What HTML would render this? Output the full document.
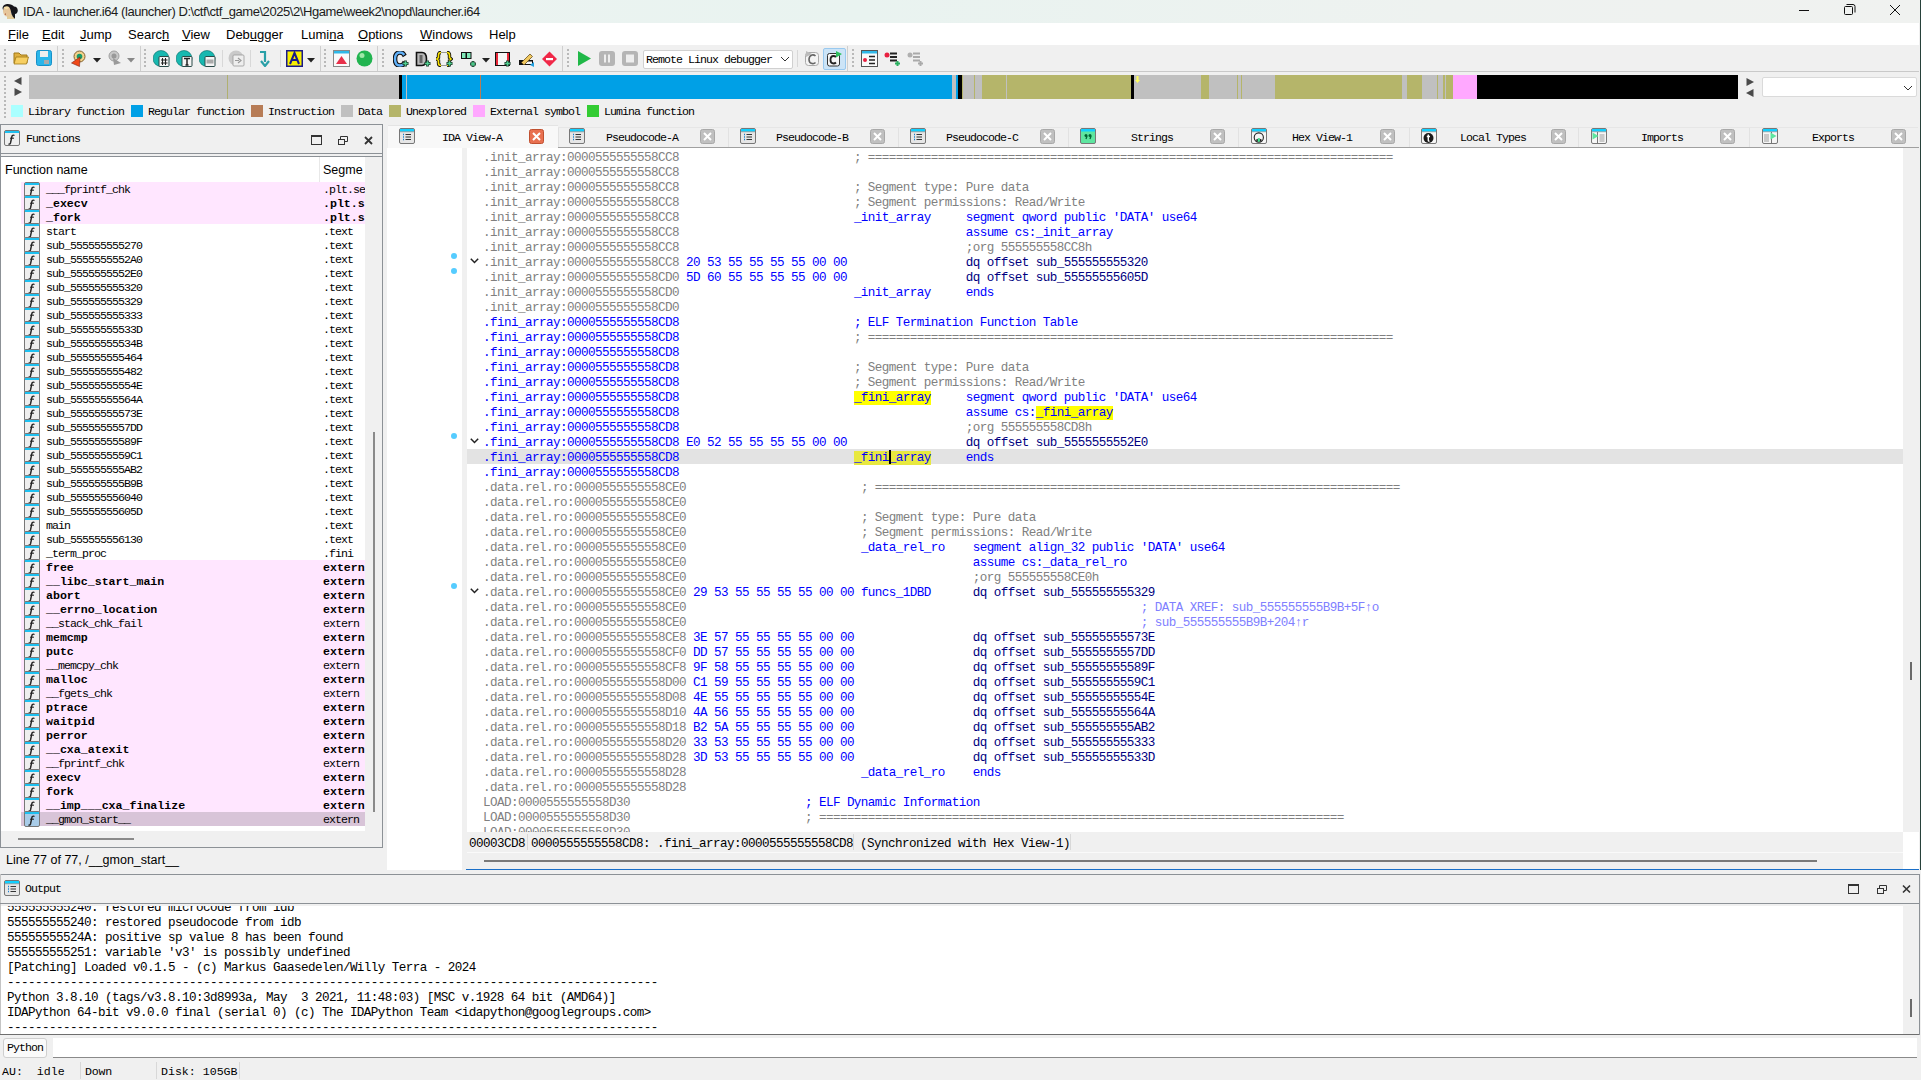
<!DOCTYPE html><html><head><meta charset="utf-8"><style>
html,body{margin:0;padding:0;}
body{width:1921px;height:1080px;position:relative;overflow:hidden;background:#f0f0f0;}
.ss{font-family:"Liberation Mono",monospace;font-size:11.6px;letter-spacing:-0.96px;line-height:14px;color:#000;}
.dm{font-family:"Liberation Mono",monospace;font-size:12.6px;letter-spacing:-0.56px;line-height:15px;}
.ui{font-family:"Liberation Sans",sans-serif;}
</style></head><body>
<div style="position:absolute;left:0px;top:0px;width:1921px;height:23px;background:linear-gradient(90deg,#edf3f1 0%,#e9f3f0 45%,#eef2f0 75%,#f0f2f0 100%)"></div><svg style="position:absolute;left:0px;top:0px" width="24" height="23" viewBox="0 0 24 23"><path d="M7 14 L14 14 L15 19 L7 19 Z" fill="#e3cc98"/><ellipse cx="7.2" cy="11" rx="4.2" ry="5.5" fill="#e6c69a"/><ellipse cx="6.5" cy="7.5" rx="2.2" ry="1.8" fill="#f6e2a8"/><path d="M5.5 13.5 Q5 14 5.5 15" stroke="#b86848" stroke-width="1"/><path d="M2.5 8 Q3 4.5 7 4 Q12 3.8 14 6.5 Q17.5 6.5 17.8 10.5 Q17.5 13.8 15 14 L15 18.8 Q12.5 17 11.5 14 Q11 10 9.5 7.5 Q7.5 5.5 4 7 Q3 9 3.2 10.5 Z" fill="#15161a"/></svg><div class="title" style="position:absolute;left:23px;top:3px;white-space:pre;font-family:'Liberation Sans', sans-serif;font-size:13px;line-height:17px;color:#1b1b1b;letter-spacing:-0.43px">IDA - launcher.i64 (launcher) D:\ctf\ctf_game\2025\2\Hgame\week2\nopd\launcher.i64</div><svg style="position:absolute;left:1795px;top:0px" width="120" height="23" viewBox="0 0 120 23"><line x1="4" y1="10.5" x2="14" y2="10.5" stroke="#111" stroke-width="1"/><rect x="49.5" y="6.5" width="8" height="8" rx="1" fill="none" stroke="#111"/><path d="M51.5 4.5 H58 Q60 4.5 60 6.5 V12.5" fill="none" stroke="#111"/><path d="M95 5 L105 15 M105 5 L95 15" stroke="#111" stroke-width="1"/></svg><div style="position:absolute;left:0px;top:23px;width:1919px;height:22px;background:#ffffff"></div><div class="menu" style="position:absolute;left:8px;top:26px;white-space:pre;font-family:'Liberation Sans', sans-serif;font-size:13px;line-height:17px;color:#000"><u>F</u>ile</div><div class="menu" style="position:absolute;left:42px;top:26px;white-space:pre;font-family:'Liberation Sans', sans-serif;font-size:13px;line-height:17px;color:#000"><u>E</u>dit</div><div class="menu" style="position:absolute;left:80px;top:26px;white-space:pre;font-family:'Liberation Sans', sans-serif;font-size:13px;line-height:17px;color:#000"><u>J</u>ump</div><div class="menu" style="position:absolute;left:128px;top:26px;white-space:pre;font-family:'Liberation Sans', sans-serif;font-size:13px;line-height:17px;color:#000">Searc<u>h</u></div><div class="menu" style="position:absolute;left:182px;top:26px;white-space:pre;font-family:'Liberation Sans', sans-serif;font-size:13px;line-height:17px;color:#000"><u>V</u>iew</div><div class="menu" style="position:absolute;left:226px;top:26px;white-space:pre;font-family:'Liberation Sans', sans-serif;font-size:13px;line-height:17px;color:#000">Deb<u>u</u>gger</div><div class="menu" style="position:absolute;left:301px;top:26px;white-space:pre;font-family:'Liberation Sans', sans-serif;font-size:13px;line-height:17px;color:#000">Lumi<u>n</u>a</div><div class="menu" style="position:absolute;left:358px;top:26px;white-space:pre;font-family:'Liberation Sans', sans-serif;font-size:13px;line-height:17px;color:#000"><u>O</u>ptions</div><div class="menu" style="position:absolute;left:420px;top:26px;white-space:pre;font-family:'Liberation Sans', sans-serif;font-size:13px;line-height:17px;color:#000"><u>W</u>indows</div><div class="menu" style="position:absolute;left:489px;top:26px;white-space:pre;font-family:'Liberation Sans', sans-serif;font-size:13px;line-height:17px;color:#000">Help</div><div style="position:absolute;left:0px;top:45px;width:1919px;height:26px;background:#f0f0f0"></div><div style="position:absolute;left:0px;top:71px;width:1919px;height:1px;background:#c9c9c9"></div><svg style="position:absolute;left:4px;top:49px" width="2" height="18" viewBox="0 0 2 18"><rect x="0" y="0" width="2" height="2" fill="#b9b9b9"/><rect x="0" y="4" width="2" height="2" fill="#b9b9b9"/><rect x="0" y="8" width="2" height="2" fill="#b9b9b9"/><rect x="0" y="12" width="2" height="2" fill="#b9b9b9"/><rect x="0" y="16" width="2" height="2" fill="#b9b9b9"/></svg><svg style="position:absolute;left:62px;top:49px" width="2" height="18" viewBox="0 0 2 18"><rect x="0" y="0" width="2" height="2" fill="#b9b9b9"/><rect x="0" y="4" width="2" height="2" fill="#b9b9b9"/><rect x="0" y="8" width="2" height="2" fill="#b9b9b9"/><rect x="0" y="12" width="2" height="2" fill="#b9b9b9"/><rect x="0" y="16" width="2" height="2" fill="#b9b9b9"/></svg><svg style="position:absolute;left:144px;top:49px" width="2" height="18" viewBox="0 0 2 18"><rect x="0" y="0" width="2" height="2" fill="#b9b9b9"/><rect x="0" y="4" width="2" height="2" fill="#b9b9b9"/><rect x="0" y="8" width="2" height="2" fill="#b9b9b9"/><rect x="0" y="12" width="2" height="2" fill="#b9b9b9"/><rect x="0" y="16" width="2" height="2" fill="#b9b9b9"/></svg><svg style="position:absolute;left:324px;top:49px" width="2" height="18" viewBox="0 0 2 18"><rect x="0" y="0" width="2" height="2" fill="#b9b9b9"/><rect x="0" y="4" width="2" height="2" fill="#b9b9b9"/><rect x="0" y="8" width="2" height="2" fill="#b9b9b9"/><rect x="0" y="12" width="2" height="2" fill="#b9b9b9"/><rect x="0" y="16" width="2" height="2" fill="#b9b9b9"/></svg><svg style="position:absolute;left:382px;top:49px" width="2" height="18" viewBox="0 0 2 18"><rect x="0" y="0" width="2" height="2" fill="#b9b9b9"/><rect x="0" y="4" width="2" height="2" fill="#b9b9b9"/><rect x="0" y="8" width="2" height="2" fill="#b9b9b9"/><rect x="0" y="12" width="2" height="2" fill="#b9b9b9"/><rect x="0" y="16" width="2" height="2" fill="#b9b9b9"/></svg><svg style="position:absolute;left:567px;top:49px" width="2" height="18" viewBox="0 0 2 18"><rect x="0" y="0" width="2" height="2" fill="#b9b9b9"/><rect x="0" y="4" width="2" height="2" fill="#b9b9b9"/><rect x="0" y="8" width="2" height="2" fill="#b9b9b9"/><rect x="0" y="12" width="2" height="2" fill="#b9b9b9"/><rect x="0" y="16" width="2" height="2" fill="#b9b9b9"/></svg><svg style="position:absolute;left:852px;top:49px" width="2" height="18" viewBox="0 0 2 18"><rect x="0" y="0" width="2" height="2" fill="#b9b9b9"/><rect x="0" y="4" width="2" height="2" fill="#b9b9b9"/><rect x="0" y="8" width="2" height="2" fill="#b9b9b9"/><rect x="0" y="12" width="2" height="2" fill="#b9b9b9"/><rect x="0" y="16" width="2" height="2" fill="#b9b9b9"/></svg><div style="position:absolute;left:57px;top:46px;width:1px;height:25px;background:#cfcfcf"></div><div style="position:absolute;left:140px;top:46px;width:1px;height:25px;background:#cfcfcf"></div><div style="position:absolute;left:320px;top:46px;width:1px;height:25px;background:#cfcfcf"></div><div style="position:absolute;left:377px;top:46px;width:1px;height:25px;background:#cfcfcf"></div><div style="position:absolute;left:562px;top:46px;width:1px;height:25px;background:#cfcfcf"></div><div style="position:absolute;left:847px;top:46px;width:1px;height:25px;background:#cfcfcf"></div><div style="position:absolute;left:222px;top:50px;width:1px;height:17px;background:#d8d8d8"></div><div style="position:absolute;left:250px;top:50px;width:1px;height:17px;background:#d8d8d8"></div><div style="position:absolute;left:280px;top:50px;width:1px;height:17px;background:#d8d8d8"></div><div style="position:absolute;left:797px;top:50px;width:1px;height:17px;background:#d8d8d8"></div><svg style="position:absolute;left:13px;top:51px" width="16" height="14" viewBox="0 0 16 14"><path d="M1 2 H6 L8 4 H14 V12 H1 Z" fill="#e0b040" stroke="#a07818"/><path d="M3 6 H15.5 L13.5 13 H1 Z" fill="#f7cf62" stroke="#a07818" stroke-width="0.8"/></svg><svg style="position:absolute;left:36px;top:50px" width="16" height="16" viewBox="0 0 16 16"><rect x="0.5" y="0.5" width="15" height="15" rx="2" fill="#2ab6ea" stroke="#1790c8"/><rect x="4" y="1" width="8" height="6" fill="#eee"/><rect x="8" y="10" width="5" height="4" fill="#aaa"/></svg><svg style="position:absolute;left:70px;top:50px" width="16" height="17" viewBox="0 0 16 17"><circle cx="9.5" cy="6.5" r="5.5" fill="#f3d28a" stroke="#806030"/><circle cx="9.5" cy="6.5" r="2.8" fill="#1a9a6a"/><path d="M1.5 13 L10 7 L9.5 16.5 Z" fill="#f04818" stroke="#802010" stroke-width="0.6"/></svg><svg style="position:absolute;left:93px;top:58px" width="8" height="5" viewBox="0 0 8 5"><path d="M0 0 H8 L4 4.5 Z" fill="#222"/></svg><svg style="position:absolute;left:106px;top:50px" width="16" height="16" viewBox="0 0 16 16"><circle cx="8" cy="6" r="5" fill="#c8c8c8" stroke="#a0a0a0"/><circle cx="8" cy="6" r="2.5" fill="#999"/><path d="M7 8 L15 13 L8 15 Z" fill="#9a9a9a"/></svg><svg style="position:absolute;left:127px;top:58px" width="8" height="5" viewBox="0 0 8 5"><path d="M0 0 H8 L4 4.5 Z" fill="#888"/></svg><svg style="position:absolute;left:153px;top:50px" width="17" height="17" viewBox="0 0 17 17"><circle cx="8" cy="8.5" r="8" fill="#18b8b0" stroke="#0a6a66" stroke-width="0.6"/><rect x="6" y="6.5" width="10" height="10" rx="1" fill="#f4f4f4" stroke="#2a4a48" stroke-width="1"/><path d="M9.5 8 V15 M12.5 8 V15 M8 10 H14.5 M8 13 H14.5" stroke="#222" stroke-width="1"/></svg><svg style="position:absolute;left:176px;top:50px" width="17" height="17" viewBox="0 0 17 17"><circle cx="8" cy="8.5" r="8" fill="#18b8b0" stroke="#0a6a66" stroke-width="0.6"/><rect x="6" y="6.5" width="10" height="10" rx="1" fill="#f4f4f4" stroke="#2a4a48" stroke-width="1"/><path d="M8 8.5 H14 M11 8.5 V15 M9.5 15 H12.5" stroke="#222" stroke-width="1.5"/></svg><svg style="position:absolute;left:199px;top:50px" width="17" height="17" viewBox="0 0 17 17"><circle cx="8" cy="8.5" r="8" fill="#18b8b0" stroke="#0a6a66" stroke-width="0.6"/><rect x="6" y="6.5" width="10" height="10" rx="1" fill="#f4f4f4" stroke="#2a4a48" stroke-width="1"/><rect x="7.5" y="9.5" width="7" height="4" fill="#aaa"/></svg><svg style="position:absolute;left:228px;top:50px" width="17" height="17" viewBox="0 0 17 17"><circle cx="8" cy="8" r="7.5" fill="#c9c9c9"/><rect x="5" y="5" width="11" height="11" rx="1" fill="#eee" stroke="#999" stroke-width="0.8"/><path d="M7 10.5 H11 M10 8 L13 10.5 L10 13" stroke="#999" stroke-width="1.2" fill="none"/></svg><svg style="position:absolute;left:258px;top:50px" width="13" height="17" viewBox="0 0 13 17"><path d="M2 2 H7 V12" stroke="#2aa0a8" stroke-width="2.2" fill="none"/><path d="M3 11 L7 16 L11 11" stroke="#2aa0a8" stroke-width="2.2" fill="none"/></svg><svg style="position:absolute;left:286px;top:50px" width="17" height="17" viewBox="0 0 17 17"><rect x="0.75" y="0.75" width="15.5" height="15.5" fill="#f8f000" stroke="#1a1a8a" stroke-width="1.5"/><path d="M4 14 L8.5 3 L13 14 M5.8 10 H11.2" stroke="#1a1a8a" stroke-width="2" fill="none"/></svg><svg style="position:absolute;left:307px;top:58px" width="8" height="5" viewBox="0 0 8 5"><path d="M0 0 H8 L4 4.5 Z" fill="#222"/></svg><svg style="position:absolute;left:333px;top:50px" width="17" height="17" viewBox="0 0 17 17"><rect x="0.5" y="0.5" width="16" height="16" fill="#fafafa" stroke="#888"/><rect x="1" y="1" width="15" height="2.5" fill="#30b8e8"/><path d="M3 14 L8.5 6 L14 14 Z" fill="#e8304a"/></svg><svg style="position:absolute;left:356px;top:50px" width="17" height="17" viewBox="0 0 17 17"><circle cx="8.5" cy="8.5" r="8" fill="#22b450"/><circle cx="6" cy="5.5" r="2.5" fill="#9fe8a8"/></svg><svg style="position:absolute;left:393px;top:51px" width="16" height="16" viewBox="0 0 16 16"><path d="M10.5 3 Q9.5 1.5 7 1.5 Q2 1.5 2 8 Q2 14.5 7 14.5 Q9.5 14.5 10.5 13" stroke="#111" stroke-width="4.6" fill="none" stroke-linecap="square"/><path d="M10.5 3 Q9.5 1.5 7 1.5 Q2 1.5 2 8 Q2 14.5 7 14.5 Q9.5 14.5 10.5 13" stroke="#60b0f8" stroke-width="2.4" fill="none" stroke-linecap="square"/><path d="M9.5 12.5 H15.5 M12.5 9.5 V15.5" stroke="#1a3a2a" stroke-width="2.8"/><path d="M10.2 12.5 H14.8 M12.5 10.2 V14.8" stroke="#50d090" stroke-width="1.4"/></svg><svg style="position:absolute;left:415px;top:51px" width="16" height="16" viewBox="0 0 16 16"><path d="M1.5 1.5 H7 Q11.5 1.5 11.5 8 Q11.5 14.5 7 14.5 H1.5 Z" fill="#b8b8b8" stroke="#111" stroke-width="1.6"/><rect x="4.5" y="4" width="3" height="8" fill="#666"/><path d="M9.5 12.5 H15.5 M12.5 9.5 V15.5" stroke="#1a3a2a" stroke-width="2.8"/><path d="M10.2 12.5 H14.8 M12.5 10.2 V14.8" stroke="#50d090" stroke-width="1.4"/></svg><svg style="position:absolute;left:436px;top:51px" width="17" height="16" viewBox="0 0 17 16"><path d="M5 1.5 Q2.5 1.5 2.5 4 V6.5 L1 8 L2.5 9.5 V12 Q2.5 14.5 5 14.5 M11 1.5 Q13.5 1.5 13.5 4 V6.5 L15 8 L13.5 9.5 V12 Q13.5 14.5 11 14.5" stroke="#111" stroke-width="3.4" fill="none"/><path d="M5 1.5 Q2.5 1.5 2.5 4 V6.5 L1 8 L2.5 9.5 V12 Q2.5 14.5 5 14.5 M11 1.5 Q13.5 1.5 13.5 4 V6.5 L15 8 L13.5 9.5 V12 Q13.5 14.5 11 14.5" stroke="#f8e000" stroke-width="1.6" fill="none"/><path d="M5 1.5 H11 M5 14.5 H11" stroke="#999" stroke-width="1.2"/><path d="M10.5 12.5 H16.5 M13.5 9.5 V15.5" stroke="#1a3a2a" stroke-width="2.8"/><path d="M11.2 12.5 H15.8 M13.5 10.2 V14.8" stroke="#50d090" stroke-width="1.4"/></svg><svg style="position:absolute;left:460px;top:51px" width="17" height="17" viewBox="0 0 17 17"><rect x="1" y="1" width="10.5" height="7" fill="#111"/><rect x="2" y="2" width="3.5" height="5" fill="#80e8b8"/><rect x="7" y="2" width="3.5" height="5" fill="#80e8b8"/><path d="M10.0 13.0 H16.0 M13.0 10.0 V16.0" stroke="#1a3a2a" stroke-width="2.8"/><path d="M10.7 13.0 H15.3 M13.0 10.7 V15.3" stroke="#50d090" stroke-width="1.4"/></svg><svg style="position:absolute;left:482px;top:58px" width="8" height="5" viewBox="0 0 8 5"><path d="M0 0 H8 L4 4.5 Z" fill="#222"/></svg><svg style="position:absolute;left:494px;top:51px" width="17" height="16" viewBox="0 0 17 16"><rect x="1" y="1" width="15" height="14" fill="#111"/><rect x="2" y="2" width="13" height="12" fill="#e82838"/><rect x="4" y="2" width="9" height="12" fill="#f6f6f6"/><path d="M10.5 12.5 H16.5 M13.5 9.5 V15.5" stroke="#1a3a2a" stroke-width="2.8"/><path d="M11.2 12.5 H15.8 M13.5 10.2 V14.8" stroke="#50d090" stroke-width="1.4"/></svg><svg style="position:absolute;left:518px;top:51px" width="17" height="17" viewBox="0 0 17 17"><path d="M1 9 H15 V14 H1 Z" fill="#111"/><rect x="5" y="10.5" width="9" height="2.5" fill="#f6f6f6"/><path d="M3.5 11.5 L12 3 L14.5 5.5 L6 14 Z" fill="#f0c860" stroke="#6a5020" stroke-width="0.8"/><path d="M12 14 L16 11 L16 16 Z" fill="#20a0e0"/></svg><svg style="position:absolute;left:541px;top:51px" width="17" height="16" viewBox="0 0 17 16"><path d="M8.5 0.5 L16 8 L8.5 15.5 L1 8 Z" fill="#f02848"/><rect x="5" y="7" width="7" height="2.2" fill="#fff"/></svg><svg style="position:absolute;left:577px;top:50px" width="15" height="17" viewBox="0 0 15 17"><path d="M1 1 L14 8.5 L1 16 Z" fill="#20b848"/></svg><svg style="position:absolute;left:599px;top:50px" width="16" height="17" viewBox="0 0 16 17"><rect x="0" y="1" width="16" height="15" rx="3" fill="#b5b5b5"/><rect x="5" y="4.5" width="2" height="8" fill="#eee"/><rect x="9" y="4.5" width="2" height="8" fill="#eee"/></svg><svg style="position:absolute;left:622px;top:50px" width="16" height="17" viewBox="0 0 16 17"><rect x="0" y="1" width="16" height="15" rx="3" fill="#b5b5b5"/><rect x="4" y="4.5" width="8" height="8" fill="#eee"/></svg><div style="position:absolute;left:643px;top:50px;width:150px;height:19px;background:#ffffff;border:1px solid #d0d0d0;box-sizing:border-box;border-radius:2px"></div><div class="ss" style="position:absolute;left:646px;top:53px;white-space:pre;">Remote Linux debugger</div><svg style="position:absolute;left:780px;top:56px" width="10" height="6" viewBox="0 0 10 6"><path d="M1 1 L5 5 L9 1" stroke="#333" fill="none"/></svg><svg style="position:absolute;left:803px;top:50px" width="17" height="17" viewBox="0 0 17 17"><rect x="2.5" y="2.5" width="13" height="13" rx="3" fill="#f4f4f4" stroke="#aaa"/><path d="M3 1 L9 4 L3 7 Z" fill="#bbb"/><path d="M12.5 6 Q11 4.5 9 5 Q6 6 6 9.5 Q6 13 9 13.5 Q11 14 12.5 12.5" stroke="#666" stroke-width="1.6" fill="none"/></svg><div style="position:absolute;left:823px;top:48px;width:23px;height:22px;background:#cce4f7;border:1px solid #99c9ef;box-sizing:border-box;border-radius:2px"></div><svg style="position:absolute;left:826px;top:50px" width="17" height="17" viewBox="0 0 17 17"><rect x="1.5" y="3.5" width="12" height="12.5" rx="2" fill="#f6f6f6" stroke="#333"/><path d="M10 7 Q9 6 7.5 6 Q4.5 6 4.5 10 Q4.5 13.5 7.5 13.5 Q9 13.5 10 12.5" stroke="#222" stroke-width="1.8" fill="none"/><path d="M10 1 L16 4 L10 7.5 Z" fill="#30c060"/></svg><svg style="position:absolute;left:861px;top:50px" width="17" height="17" viewBox="0 0 17 17"><rect x="0.5" y="0.5" width="16" height="16" fill="#fafafa" stroke="#555"/><rect x="1" y="1" width="15" height="2.5" fill="#30b8e8"/><circle cx="4" cy="10" r="2" fill="#e82040"/><path d="M8 6.5 H14 M8 10 H14 M8 13.5 H14" stroke="#222" stroke-width="1.6"/></svg><svg style="position:absolute;left:884px;top:50px" width="17" height="17" viewBox="0 0 17 17"><circle cx="3" cy="5" r="2.5" fill="#e82040"/><path d="M6 3.5 H13 M6 7 H13 M6 10.5 H13" stroke="#222" stroke-width="1.8"/><path d="M11.0 13.5 H16.0 M13.5 11.0 V16.0" stroke="#2bb060" stroke-width="2"/></svg><svg style="position:absolute;left:907px;top:50px" width="17" height="17" viewBox="0 0 17 17"><circle cx="3" cy="5" r="2.5" fill="#b0b0b0"/><path d="M6 3.5 H13 M6 7 H13 M6 10.5 H13" stroke="#aaa" stroke-width="1.8"/><path d="M11.0 13.5 H16.0 M13.5 11.0 V16.0" stroke="#aaa" stroke-width="2"/></svg><svg style="position:absolute;left:4px;top:76px" width="2" height="42" viewBox="0 0 2 42"><rect x="0" y="0" width="2" height="2" fill="#b9b9b9"/><rect x="0" y="4" width="2" height="2" fill="#b9b9b9"/><rect x="0" y="8" width="2" height="2" fill="#b9b9b9"/><rect x="0" y="12" width="2" height="2" fill="#b9b9b9"/><rect x="0" y="16" width="2" height="2" fill="#b9b9b9"/><rect x="0" y="20" width="2" height="2" fill="#b9b9b9"/><rect x="0" y="24" width="2" height="2" fill="#b9b9b9"/><rect x="0" y="28" width="2" height="2" fill="#b9b9b9"/><rect x="0" y="32" width="2" height="2" fill="#b9b9b9"/><rect x="0" y="36" width="2" height="2" fill="#b9b9b9"/><rect x="0" y="40" width="2" height="2" fill="#b9b9b9"/></svg><svg style="position:absolute;left:13px;top:76px" width="10" height="22" viewBox="0 0 10 22"><path d="M8.5 1 L1 5 L8.5 9 Z" fill="#4a4a4a"/><path d="M1.5 12 L9 16 L1.5 20 Z" fill="#4a4a4a"/></svg><div style="position:absolute;left:29px;top:75px;width:370px;height:24px;background:#c0c0c0"></div><div style="position:absolute;left:227px;top:75px;width:1px;height:24px;background:#b0b070"></div><div style="position:absolute;left:399px;top:75px;width:3px;height:24px;background:#000"></div><div style="position:absolute;left:402px;top:75px;width:1335px;height:24px;background:#00a0e6"></div><div style="position:absolute;left:406px;top:75px;width:1px;height:24px;background:#c0c0c0"></div><div style="position:absolute;left:480px;top:75px;width:1px;height:24px;background:#b77c56"></div><div style="position:absolute;left:952px;top:75px;width:4px;height:24px;background:#c0c0c0"></div><div style="position:absolute;left:958px;top:75px;width:4px;height:24px;background:#000"></div><div style="position:absolute;left:962px;top:75px;width:1px;height:24px;background:#b5b56a"></div><div style="position:absolute;left:963px;top:75px;width:19px;height:24px;background:#c0c0c0"></div><div style="position:absolute;left:974px;top:75px;width:1px;height:24px;background:#b5b56a"></div><div style="position:absolute;left:982px;top:75px;width:149px;height:24px;background:#b5b56a"></div><div style="position:absolute;left:1006px;top:75px;width:1px;height:24px;background:#c0c0c0"></div><div style="position:absolute;left:1131px;top:75px;width:3px;height:24px;background:#000"></div><div style="position:absolute;left:1134px;top:75px;width:67px;height:24px;background:#c0c0c0"></div><div style="position:absolute;left:1201px;top:75px;width:8px;height:24px;background:#b5b56a"></div><div style="position:absolute;left:1209px;top:75px;width:66px;height:24px;background:#c0c0c0"></div><div style="position:absolute;left:1237px;top:75px;width:1px;height:24px;background:#b5b56a"></div><div style="position:absolute;left:1241px;top:75px;width:1px;height:24px;background:#b5b56a"></div><div style="position:absolute;left:1275px;top:75px;width:127px;height:24px;background:#b5b56a"></div><div style="position:absolute;left:1402px;top:75px;width:5px;height:24px;background:#c0c0c0"></div><div style="position:absolute;left:1407px;top:75px;width:15px;height:24px;background:#b5b56a"></div><div style="position:absolute;left:1422px;top:75px;width:21px;height:24px;background:#c0c0c0"></div><div style="position:absolute;left:1437px;top:75px;width:1px;height:24px;background:#b5b56a"></div><div style="position:absolute;left:1443px;top:75px;width:10px;height:24px;background:#b5b56a"></div><div style="position:absolute;left:1445px;top:75px;width:1px;height:24px;background:#c0c0c0"></div><div style="position:absolute;left:1453px;top:75px;width:24px;height:24px;background:#ffa8ff"></div><div style="position:absolute;left:1477px;top:75px;width:261px;height:24px;background:#000"></div><svg style="position:absolute;left:1135px;top:76px" width="5" height="7" viewBox="0 0 5 7"><path d="M1.5 0 H3.5 V4 H5 L2.5 7 L0 4 H1.5 Z" fill="#ffff60"/></svg><svg style="position:absolute;left:1745px;top:77px" width="10" height="22" viewBox="0 0 10 22"><path d="M1.5 1 L9 5 L1.5 9 Z" fill="#4a4a4a"/><path d="M8.5 12 L1 16 L8.5 20 Z" fill="#4a4a4a"/></svg><div style="position:absolute;left:1762px;top:77px;width:155px;height:20px;background:#fff;border:1px solid #dadada;box-sizing:border-box;border-radius:2px"></div><svg style="position:absolute;left:1903px;top:85px" width="10" height="6" viewBox="0 0 10 6"><path d="M1 1 L5 5 L9 1" stroke="#333" fill="none"/></svg><div style="position:absolute;left:11px;top:105px;width:12px;height:12px;background:#aaffff"></div><div class="ss" style="position:absolute;left:28px;top:105px;white-space:pre;">Library function</div><div style="position:absolute;left:131px;top:105px;width:12px;height:12px;background:#00a0e6"></div><div class="ss" style="position:absolute;left:148px;top:105px;white-space:pre;">Regular function</div><div style="position:absolute;left:251px;top:105px;width:12px;height:12px;background:#b77c56"></div><div class="ss" style="position:absolute;left:268px;top:105px;white-space:pre;">Instruction</div><div style="position:absolute;left:341px;top:105px;width:12px;height:12px;background:#c0c0c0"></div><div class="ss" style="position:absolute;left:358px;top:105px;white-space:pre;">Data</div><div style="position:absolute;left:389px;top:105px;width:12px;height:12px;background:#b5b56a"></div><div class="ss" style="position:absolute;left:406px;top:105px;white-space:pre;">Unexplored</div><div style="position:absolute;left:473px;top:105px;width:12px;height:12px;background:#ffa8ff"></div><div class="ss" style="position:absolute;left:490px;top:105px;white-space:pre;">External symbol</div><div style="position:absolute;left:587px;top:105px;width:12px;height:12px;background:#33cc33"></div><div class="ss" style="position:absolute;left:604px;top:105px;white-space:pre;">Lumina function</div><div style="position:absolute;left:0px;top:124px;width:383px;height:1px;background:#8c9196"></div><div style="position:absolute;left:0px;top:124px;width:1px;height:724px;background:#8c9196"></div><div style="position:absolute;left:382px;top:124px;width:1px;height:724px;background:#8c9196"></div><div style="position:absolute;left:1px;top:125px;width:381px;height:28px;background:#f0f0f0"></div><div style="position:absolute;left:0px;top:153px;width:383px;height:1px;background:#8c9196"></div><div style="position:absolute;left:0px;top:156px;width:383px;height:1px;background:#8c9196"></div><svg style="position:absolute;left:4px;top:130px" width="16" height="16" viewBox="0 0 16 16"><rect x="0.5" y="0.5" width="15" height="15" rx="1.5" fill="#eeeeee" stroke="#777"/><rect x="1" y="1" width="14" height="2" fill="#1ec0f0"/><path d="M10.5 5.5 Q9 4.5 8 6 L6.5 13 Q6 14.5 4.5 14" stroke="#222" stroke-width="1.4" fill="none"/><path d="M6 8.2 H10" stroke="#222" stroke-width="1"/></svg><div class="ss" style="position:absolute;left:26px;top:132px;white-space:pre;">Functions</div><svg style="position:absolute;left:310px;top:133px" width="66" height="14" viewBox="0 0 66 14"><rect x="1.5" y="2.5" width="10" height="9" fill="none" stroke="#333"/><rect x="1.5" y="2" width="10" height="2" fill="#333"/><rect x="28.5" y="6.5" width="6" height="5" fill="none" stroke="#333"/><path d="M30.5 6.5 V3.5 H37.5 V8.5 H34.5" fill="none" stroke="#333"/><path d="M55 4 L62 11 M62 4 L55 11" stroke="#333" stroke-width="1.8"/></svg><div style="position:absolute;left:1px;top:157px;width:381px;height:690px;background:#ffffff"></div><div style="position:absolute;left:365px;top:157px;width:17px;height:690px;background:#f0f0f0"></div><div style="position:absolute;left:319px;top:157px;width:1px;height:25px;background:#e8e8e8"></div><div style="position:absolute;left:5px;top:162px;white-space:pre;font-family:'Liberation Sans', sans-serif;font-size:12.5px;line-height:16px;color:#000">Function name</div><div style="position:absolute;left:323px;top:162px;white-space:pre;font-family:'Liberation Sans', sans-serif;font-size:12.5px;line-height:16px;color:#000">Segme</div><div style="position:absolute;left:21px;top:182px;width:344px;height:14px;background:#ffe6ff"></div><svg style="position:absolute;left:24px;top:182px" width="16" height="16" viewBox="0 0 16 16"><rect x="0.5" y="0.5" width="15" height="15" rx="1.5" fill="#eeeeee" stroke="#777"/><rect x="1" y="1" width="14" height="2" fill="#1ec0f0"/><path d="M10.5 5.5 Q9 4.5 8 6 L6.5 13 Q6 14.5 4.5 14" stroke="#222" stroke-width="1.4" fill="none"/><path d="M6 8.2 H10" stroke="#222" stroke-width="1"/></svg><div class="ss" style="position:absolute;left:46px;top:183px;white-space:pre;">___fprintf_chk</div><div class="ss" style="position:absolute;left:323px;top:183px;width:42px;overflow:hidden;white-space:pre;">.plt.se</div><div style="position:absolute;left:21px;top:196px;width:344px;height:14px;background:#ffe6ff"></div><svg style="position:absolute;left:24px;top:195px" width="16" height="16" viewBox="0 0 16 16"><rect x="0.5" y="0.5" width="15" height="15" rx="1.5" fill="#eeeeee" stroke="#777"/><rect x="1" y="1" width="14" height="2" fill="#1ec0f0"/><path d="M10.5 5.5 Q9 4.5 8 6 L6.5 13 Q6 14.5 4.5 14" stroke="#222" stroke-width="1.4" fill="none"/><path d="M6 8.2 H10" stroke="#222" stroke-width="1"/></svg><div class="ss" style="position:absolute;left:46px;top:197px;white-space:pre;font-weight:bold;letter-spacing:0;">_execv</div><div class="ss" style="position:absolute;left:323px;top:197px;width:42px;overflow:hidden;white-space:pre;font-weight:bold;letter-spacing:0;">.plt.s</div><div style="position:absolute;left:21px;top:210px;width:344px;height:14px;background:#ffe6ff"></div><svg style="position:absolute;left:24px;top:209px" width="16" height="16" viewBox="0 0 16 16"><rect x="0.5" y="0.5" width="15" height="15" rx="1.5" fill="#eeeeee" stroke="#777"/><rect x="1" y="1" width="14" height="2" fill="#1ec0f0"/><path d="M10.5 5.5 Q9 4.5 8 6 L6.5 13 Q6 14.5 4.5 14" stroke="#222" stroke-width="1.4" fill="none"/><path d="M6 8.2 H10" stroke="#222" stroke-width="1"/></svg><div class="ss" style="position:absolute;left:46px;top:211px;white-space:pre;font-weight:bold;letter-spacing:0;">_fork</div><div class="ss" style="position:absolute;left:323px;top:211px;width:42px;overflow:hidden;white-space:pre;font-weight:bold;letter-spacing:0;">.plt.s</div><svg style="position:absolute;left:24px;top:223px" width="16" height="16" viewBox="0 0 16 16"><rect x="0.5" y="0.5" width="15" height="15" rx="1.5" fill="#eeeeee" stroke="#777"/><rect x="1" y="1" width="14" height="2" fill="#1ec0f0"/><path d="M10.5 5.5 Q9 4.5 8 6 L6.5 13 Q6 14.5 4.5 14" stroke="#222" stroke-width="1.4" fill="none"/><path d="M6 8.2 H10" stroke="#222" stroke-width="1"/></svg><div class="ss" style="position:absolute;left:46px;top:225px;white-space:pre;">start</div><div class="ss" style="position:absolute;left:323px;top:225px;width:42px;overflow:hidden;white-space:pre;">.text</div><svg style="position:absolute;left:24px;top:237px" width="16" height="16" viewBox="0 0 16 16"><rect x="0.5" y="0.5" width="15" height="15" rx="1.5" fill="#eeeeee" stroke="#777"/><rect x="1" y="1" width="14" height="2" fill="#1ec0f0"/><path d="M10.5 5.5 Q9 4.5 8 6 L6.5 13 Q6 14.5 4.5 14" stroke="#222" stroke-width="1.4" fill="none"/><path d="M6 8.2 H10" stroke="#222" stroke-width="1"/></svg><div class="ss" style="position:absolute;left:46px;top:239px;white-space:pre;">sub_555555555270</div><div class="ss" style="position:absolute;left:323px;top:239px;width:42px;overflow:hidden;white-space:pre;">.text</div><svg style="position:absolute;left:24px;top:251px" width="16" height="16" viewBox="0 0 16 16"><rect x="0.5" y="0.5" width="15" height="15" rx="1.5" fill="#eeeeee" stroke="#777"/><rect x="1" y="1" width="14" height="2" fill="#1ec0f0"/><path d="M10.5 5.5 Q9 4.5 8 6 L6.5 13 Q6 14.5 4.5 14" stroke="#222" stroke-width="1.4" fill="none"/><path d="M6 8.2 H10" stroke="#222" stroke-width="1"/></svg><div class="ss" style="position:absolute;left:46px;top:253px;white-space:pre;">sub_5555555552A0</div><div class="ss" style="position:absolute;left:323px;top:253px;width:42px;overflow:hidden;white-space:pre;">.text</div><svg style="position:absolute;left:24px;top:265px" width="16" height="16" viewBox="0 0 16 16"><rect x="0.5" y="0.5" width="15" height="15" rx="1.5" fill="#eeeeee" stroke="#777"/><rect x="1" y="1" width="14" height="2" fill="#1ec0f0"/><path d="M10.5 5.5 Q9 4.5 8 6 L6.5 13 Q6 14.5 4.5 14" stroke="#222" stroke-width="1.4" fill="none"/><path d="M6 8.2 H10" stroke="#222" stroke-width="1"/></svg><div class="ss" style="position:absolute;left:46px;top:267px;white-space:pre;">sub_5555555552E0</div><div class="ss" style="position:absolute;left:323px;top:267px;width:42px;overflow:hidden;white-space:pre;">.text</div><svg style="position:absolute;left:24px;top:279px" width="16" height="16" viewBox="0 0 16 16"><rect x="0.5" y="0.5" width="15" height="15" rx="1.5" fill="#eeeeee" stroke="#777"/><rect x="1" y="1" width="14" height="2" fill="#1ec0f0"/><path d="M10.5 5.5 Q9 4.5 8 6 L6.5 13 Q6 14.5 4.5 14" stroke="#222" stroke-width="1.4" fill="none"/><path d="M6 8.2 H10" stroke="#222" stroke-width="1"/></svg><div class="ss" style="position:absolute;left:46px;top:281px;white-space:pre;">sub_555555555320</div><div class="ss" style="position:absolute;left:323px;top:281px;width:42px;overflow:hidden;white-space:pre;">.text</div><svg style="position:absolute;left:24px;top:293px" width="16" height="16" viewBox="0 0 16 16"><rect x="0.5" y="0.5" width="15" height="15" rx="1.5" fill="#eeeeee" stroke="#777"/><rect x="1" y="1" width="14" height="2" fill="#1ec0f0"/><path d="M10.5 5.5 Q9 4.5 8 6 L6.5 13 Q6 14.5 4.5 14" stroke="#222" stroke-width="1.4" fill="none"/><path d="M6 8.2 H10" stroke="#222" stroke-width="1"/></svg><div class="ss" style="position:absolute;left:46px;top:295px;white-space:pre;">sub_555555555329</div><div class="ss" style="position:absolute;left:323px;top:295px;width:42px;overflow:hidden;white-space:pre;">.text</div><svg style="position:absolute;left:24px;top:307px" width="16" height="16" viewBox="0 0 16 16"><rect x="0.5" y="0.5" width="15" height="15" rx="1.5" fill="#eeeeee" stroke="#777"/><rect x="1" y="1" width="14" height="2" fill="#1ec0f0"/><path d="M10.5 5.5 Q9 4.5 8 6 L6.5 13 Q6 14.5 4.5 14" stroke="#222" stroke-width="1.4" fill="none"/><path d="M6 8.2 H10" stroke="#222" stroke-width="1"/></svg><div class="ss" style="position:absolute;left:46px;top:309px;white-space:pre;">sub_555555555333</div><div class="ss" style="position:absolute;left:323px;top:309px;width:42px;overflow:hidden;white-space:pre;">.text</div><svg style="position:absolute;left:24px;top:321px" width="16" height="16" viewBox="0 0 16 16"><rect x="0.5" y="0.5" width="15" height="15" rx="1.5" fill="#eeeeee" stroke="#777"/><rect x="1" y="1" width="14" height="2" fill="#1ec0f0"/><path d="M10.5 5.5 Q9 4.5 8 6 L6.5 13 Q6 14.5 4.5 14" stroke="#222" stroke-width="1.4" fill="none"/><path d="M6 8.2 H10" stroke="#222" stroke-width="1"/></svg><div class="ss" style="position:absolute;left:46px;top:323px;white-space:pre;">sub_55555555533D</div><div class="ss" style="position:absolute;left:323px;top:323px;width:42px;overflow:hidden;white-space:pre;">.text</div><svg style="position:absolute;left:24px;top:335px" width="16" height="16" viewBox="0 0 16 16"><rect x="0.5" y="0.5" width="15" height="15" rx="1.5" fill="#eeeeee" stroke="#777"/><rect x="1" y="1" width="14" height="2" fill="#1ec0f0"/><path d="M10.5 5.5 Q9 4.5 8 6 L6.5 13 Q6 14.5 4.5 14" stroke="#222" stroke-width="1.4" fill="none"/><path d="M6 8.2 H10" stroke="#222" stroke-width="1"/></svg><div class="ss" style="position:absolute;left:46px;top:337px;white-space:pre;">sub_55555555534B</div><div class="ss" style="position:absolute;left:323px;top:337px;width:42px;overflow:hidden;white-space:pre;">.text</div><svg style="position:absolute;left:24px;top:349px" width="16" height="16" viewBox="0 0 16 16"><rect x="0.5" y="0.5" width="15" height="15" rx="1.5" fill="#eeeeee" stroke="#777"/><rect x="1" y="1" width="14" height="2" fill="#1ec0f0"/><path d="M10.5 5.5 Q9 4.5 8 6 L6.5 13 Q6 14.5 4.5 14" stroke="#222" stroke-width="1.4" fill="none"/><path d="M6 8.2 H10" stroke="#222" stroke-width="1"/></svg><div class="ss" style="position:absolute;left:46px;top:351px;white-space:pre;">sub_555555555464</div><div class="ss" style="position:absolute;left:323px;top:351px;width:42px;overflow:hidden;white-space:pre;">.text</div><svg style="position:absolute;left:24px;top:363px" width="16" height="16" viewBox="0 0 16 16"><rect x="0.5" y="0.5" width="15" height="15" rx="1.5" fill="#eeeeee" stroke="#777"/><rect x="1" y="1" width="14" height="2" fill="#1ec0f0"/><path d="M10.5 5.5 Q9 4.5 8 6 L6.5 13 Q6 14.5 4.5 14" stroke="#222" stroke-width="1.4" fill="none"/><path d="M6 8.2 H10" stroke="#222" stroke-width="1"/></svg><div class="ss" style="position:absolute;left:46px;top:365px;white-space:pre;">sub_555555555482</div><div class="ss" style="position:absolute;left:323px;top:365px;width:42px;overflow:hidden;white-space:pre;">.text</div><svg style="position:absolute;left:24px;top:377px" width="16" height="16" viewBox="0 0 16 16"><rect x="0.5" y="0.5" width="15" height="15" rx="1.5" fill="#eeeeee" stroke="#777"/><rect x="1" y="1" width="14" height="2" fill="#1ec0f0"/><path d="M10.5 5.5 Q9 4.5 8 6 L6.5 13 Q6 14.5 4.5 14" stroke="#222" stroke-width="1.4" fill="none"/><path d="M6 8.2 H10" stroke="#222" stroke-width="1"/></svg><div class="ss" style="position:absolute;left:46px;top:379px;white-space:pre;">sub_55555555554E</div><div class="ss" style="position:absolute;left:323px;top:379px;width:42px;overflow:hidden;white-space:pre;">.text</div><svg style="position:absolute;left:24px;top:391px" width="16" height="16" viewBox="0 0 16 16"><rect x="0.5" y="0.5" width="15" height="15" rx="1.5" fill="#eeeeee" stroke="#777"/><rect x="1" y="1" width="14" height="2" fill="#1ec0f0"/><path d="M10.5 5.5 Q9 4.5 8 6 L6.5 13 Q6 14.5 4.5 14" stroke="#222" stroke-width="1.4" fill="none"/><path d="M6 8.2 H10" stroke="#222" stroke-width="1"/></svg><div class="ss" style="position:absolute;left:46px;top:393px;white-space:pre;">sub_55555555564A</div><div class="ss" style="position:absolute;left:323px;top:393px;width:42px;overflow:hidden;white-space:pre;">.text</div><svg style="position:absolute;left:24px;top:405px" width="16" height="16" viewBox="0 0 16 16"><rect x="0.5" y="0.5" width="15" height="15" rx="1.5" fill="#eeeeee" stroke="#777"/><rect x="1" y="1" width="14" height="2" fill="#1ec0f0"/><path d="M10.5 5.5 Q9 4.5 8 6 L6.5 13 Q6 14.5 4.5 14" stroke="#222" stroke-width="1.4" fill="none"/><path d="M6 8.2 H10" stroke="#222" stroke-width="1"/></svg><div class="ss" style="position:absolute;left:46px;top:407px;white-space:pre;">sub_55555555573E</div><div class="ss" style="position:absolute;left:323px;top:407px;width:42px;overflow:hidden;white-space:pre;">.text</div><svg style="position:absolute;left:24px;top:419px" width="16" height="16" viewBox="0 0 16 16"><rect x="0.5" y="0.5" width="15" height="15" rx="1.5" fill="#eeeeee" stroke="#777"/><rect x="1" y="1" width="14" height="2" fill="#1ec0f0"/><path d="M10.5 5.5 Q9 4.5 8 6 L6.5 13 Q6 14.5 4.5 14" stroke="#222" stroke-width="1.4" fill="none"/><path d="M6 8.2 H10" stroke="#222" stroke-width="1"/></svg><div class="ss" style="position:absolute;left:46px;top:421px;white-space:pre;">sub_5555555557DD</div><div class="ss" style="position:absolute;left:323px;top:421px;width:42px;overflow:hidden;white-space:pre;">.text</div><svg style="position:absolute;left:24px;top:433px" width="16" height="16" viewBox="0 0 16 16"><rect x="0.5" y="0.5" width="15" height="15" rx="1.5" fill="#eeeeee" stroke="#777"/><rect x="1" y="1" width="14" height="2" fill="#1ec0f0"/><path d="M10.5 5.5 Q9 4.5 8 6 L6.5 13 Q6 14.5 4.5 14" stroke="#222" stroke-width="1.4" fill="none"/><path d="M6 8.2 H10" stroke="#222" stroke-width="1"/></svg><div class="ss" style="position:absolute;left:46px;top:435px;white-space:pre;">sub_55555555589F</div><div class="ss" style="position:absolute;left:323px;top:435px;width:42px;overflow:hidden;white-space:pre;">.text</div><svg style="position:absolute;left:24px;top:447px" width="16" height="16" viewBox="0 0 16 16"><rect x="0.5" y="0.5" width="15" height="15" rx="1.5" fill="#eeeeee" stroke="#777"/><rect x="1" y="1" width="14" height="2" fill="#1ec0f0"/><path d="M10.5 5.5 Q9 4.5 8 6 L6.5 13 Q6 14.5 4.5 14" stroke="#222" stroke-width="1.4" fill="none"/><path d="M6 8.2 H10" stroke="#222" stroke-width="1"/></svg><div class="ss" style="position:absolute;left:46px;top:449px;white-space:pre;">sub_5555555559C1</div><div class="ss" style="position:absolute;left:323px;top:449px;width:42px;overflow:hidden;white-space:pre;">.text</div><svg style="position:absolute;left:24px;top:461px" width="16" height="16" viewBox="0 0 16 16"><rect x="0.5" y="0.5" width="15" height="15" rx="1.5" fill="#eeeeee" stroke="#777"/><rect x="1" y="1" width="14" height="2" fill="#1ec0f0"/><path d="M10.5 5.5 Q9 4.5 8 6 L6.5 13 Q6 14.5 4.5 14" stroke="#222" stroke-width="1.4" fill="none"/><path d="M6 8.2 H10" stroke="#222" stroke-width="1"/></svg><div class="ss" style="position:absolute;left:46px;top:463px;white-space:pre;">sub_555555555AB2</div><div class="ss" style="position:absolute;left:323px;top:463px;width:42px;overflow:hidden;white-space:pre;">.text</div><svg style="position:absolute;left:24px;top:475px" width="16" height="16" viewBox="0 0 16 16"><rect x="0.5" y="0.5" width="15" height="15" rx="1.5" fill="#eeeeee" stroke="#777"/><rect x="1" y="1" width="14" height="2" fill="#1ec0f0"/><path d="M10.5 5.5 Q9 4.5 8 6 L6.5 13 Q6 14.5 4.5 14" stroke="#222" stroke-width="1.4" fill="none"/><path d="M6 8.2 H10" stroke="#222" stroke-width="1"/></svg><div class="ss" style="position:absolute;left:46px;top:477px;white-space:pre;">sub_555555555B9B</div><div class="ss" style="position:absolute;left:323px;top:477px;width:42px;overflow:hidden;white-space:pre;">.text</div><svg style="position:absolute;left:24px;top:489px" width="16" height="16" viewBox="0 0 16 16"><rect x="0.5" y="0.5" width="15" height="15" rx="1.5" fill="#eeeeee" stroke="#777"/><rect x="1" y="1" width="14" height="2" fill="#1ec0f0"/><path d="M10.5 5.5 Q9 4.5 8 6 L6.5 13 Q6 14.5 4.5 14" stroke="#222" stroke-width="1.4" fill="none"/><path d="M6 8.2 H10" stroke="#222" stroke-width="1"/></svg><div class="ss" style="position:absolute;left:46px;top:491px;white-space:pre;">sub_555555556040</div><div class="ss" style="position:absolute;left:323px;top:491px;width:42px;overflow:hidden;white-space:pre;">.text</div><svg style="position:absolute;left:24px;top:503px" width="16" height="16" viewBox="0 0 16 16"><rect x="0.5" y="0.5" width="15" height="15" rx="1.5" fill="#eeeeee" stroke="#777"/><rect x="1" y="1" width="14" height="2" fill="#1ec0f0"/><path d="M10.5 5.5 Q9 4.5 8 6 L6.5 13 Q6 14.5 4.5 14" stroke="#222" stroke-width="1.4" fill="none"/><path d="M6 8.2 H10" stroke="#222" stroke-width="1"/></svg><div class="ss" style="position:absolute;left:46px;top:505px;white-space:pre;">sub_55555555605D</div><div class="ss" style="position:absolute;left:323px;top:505px;width:42px;overflow:hidden;white-space:pre;">.text</div><svg style="position:absolute;left:24px;top:517px" width="16" height="16" viewBox="0 0 16 16"><rect x="0.5" y="0.5" width="15" height="15" rx="1.5" fill="#eeeeee" stroke="#777"/><rect x="1" y="1" width="14" height="2" fill="#1ec0f0"/><path d="M10.5 5.5 Q9 4.5 8 6 L6.5 13 Q6 14.5 4.5 14" stroke="#222" stroke-width="1.4" fill="none"/><path d="M6 8.2 H10" stroke="#222" stroke-width="1"/></svg><div class="ss" style="position:absolute;left:46px;top:519px;white-space:pre;">main</div><div class="ss" style="position:absolute;left:323px;top:519px;width:42px;overflow:hidden;white-space:pre;">.text</div><svg style="position:absolute;left:24px;top:531px" width="16" height="16" viewBox="0 0 16 16"><rect x="0.5" y="0.5" width="15" height="15" rx="1.5" fill="#eeeeee" stroke="#777"/><rect x="1" y="1" width="14" height="2" fill="#1ec0f0"/><path d="M10.5 5.5 Q9 4.5 8 6 L6.5 13 Q6 14.5 4.5 14" stroke="#222" stroke-width="1.4" fill="none"/><path d="M6 8.2 H10" stroke="#222" stroke-width="1"/></svg><div class="ss" style="position:absolute;left:46px;top:533px;white-space:pre;">sub_555555556130</div><div class="ss" style="position:absolute;left:323px;top:533px;width:42px;overflow:hidden;white-space:pre;">.text</div><svg style="position:absolute;left:24px;top:545px" width="16" height="16" viewBox="0 0 16 16"><rect x="0.5" y="0.5" width="15" height="15" rx="1.5" fill="#eeeeee" stroke="#777"/><rect x="1" y="1" width="14" height="2" fill="#1ec0f0"/><path d="M10.5 5.5 Q9 4.5 8 6 L6.5 13 Q6 14.5 4.5 14" stroke="#222" stroke-width="1.4" fill="none"/><path d="M6 8.2 H10" stroke="#222" stroke-width="1"/></svg><div class="ss" style="position:absolute;left:46px;top:547px;white-space:pre;">_term_proc</div><div class="ss" style="position:absolute;left:323px;top:547px;width:42px;overflow:hidden;white-space:pre;">.fini</div><div style="position:absolute;left:21px;top:560px;width:344px;height:14px;background:#ffe6ff"></div><svg style="position:absolute;left:24px;top:559px" width="16" height="16" viewBox="0 0 16 16"><rect x="0.5" y="0.5" width="15" height="15" rx="1.5" fill="#eeeeee" stroke="#777"/><rect x="1" y="1" width="14" height="2" fill="#1ec0f0"/><path d="M10.5 5.5 Q9 4.5 8 6 L6.5 13 Q6 14.5 4.5 14" stroke="#222" stroke-width="1.4" fill="none"/><path d="M6 8.2 H10" stroke="#222" stroke-width="1"/></svg><div class="ss" style="position:absolute;left:46px;top:561px;white-space:pre;font-weight:bold;letter-spacing:0;">free</div><div class="ss" style="position:absolute;left:323px;top:561px;width:42px;overflow:hidden;white-space:pre;font-weight:bold;letter-spacing:0;">extern</div><div style="position:absolute;left:21px;top:574px;width:344px;height:14px;background:#ffe6ff"></div><svg style="position:absolute;left:24px;top:573px" width="16" height="16" viewBox="0 0 16 16"><rect x="0.5" y="0.5" width="15" height="15" rx="1.5" fill="#eeeeee" stroke="#777"/><rect x="1" y="1" width="14" height="2" fill="#1ec0f0"/><path d="M10.5 5.5 Q9 4.5 8 6 L6.5 13 Q6 14.5 4.5 14" stroke="#222" stroke-width="1.4" fill="none"/><path d="M6 8.2 H10" stroke="#222" stroke-width="1"/></svg><div class="ss" style="position:absolute;left:46px;top:575px;white-space:pre;font-weight:bold;letter-spacing:0;">__libc_start_main</div><div class="ss" style="position:absolute;left:323px;top:575px;width:42px;overflow:hidden;white-space:pre;font-weight:bold;letter-spacing:0;">extern</div><div style="position:absolute;left:21px;top:588px;width:344px;height:14px;background:#ffe6ff"></div><svg style="position:absolute;left:24px;top:587px" width="16" height="16" viewBox="0 0 16 16"><rect x="0.5" y="0.5" width="15" height="15" rx="1.5" fill="#eeeeee" stroke="#777"/><rect x="1" y="1" width="14" height="2" fill="#1ec0f0"/><path d="M10.5 5.5 Q9 4.5 8 6 L6.5 13 Q6 14.5 4.5 14" stroke="#222" stroke-width="1.4" fill="none"/><path d="M6 8.2 H10" stroke="#222" stroke-width="1"/></svg><div class="ss" style="position:absolute;left:46px;top:589px;white-space:pre;font-weight:bold;letter-spacing:0;">abort</div><div class="ss" style="position:absolute;left:323px;top:589px;width:42px;overflow:hidden;white-space:pre;font-weight:bold;letter-spacing:0;">extern</div><div style="position:absolute;left:21px;top:602px;width:344px;height:14px;background:#ffe6ff"></div><svg style="position:absolute;left:24px;top:601px" width="16" height="16" viewBox="0 0 16 16"><rect x="0.5" y="0.5" width="15" height="15" rx="1.5" fill="#eeeeee" stroke="#777"/><rect x="1" y="1" width="14" height="2" fill="#1ec0f0"/><path d="M10.5 5.5 Q9 4.5 8 6 L6.5 13 Q6 14.5 4.5 14" stroke="#222" stroke-width="1.4" fill="none"/><path d="M6 8.2 H10" stroke="#222" stroke-width="1"/></svg><div class="ss" style="position:absolute;left:46px;top:603px;white-space:pre;font-weight:bold;letter-spacing:0;">__errno_location</div><div class="ss" style="position:absolute;left:323px;top:603px;width:42px;overflow:hidden;white-space:pre;font-weight:bold;letter-spacing:0;">extern</div><div style="position:absolute;left:21px;top:616px;width:344px;height:14px;background:#ffe6ff"></div><svg style="position:absolute;left:24px;top:615px" width="16" height="16" viewBox="0 0 16 16"><rect x="0.5" y="0.5" width="15" height="15" rx="1.5" fill="#eeeeee" stroke="#777"/><rect x="1" y="1" width="14" height="2" fill="#1ec0f0"/><path d="M10.5 5.5 Q9 4.5 8 6 L6.5 13 Q6 14.5 4.5 14" stroke="#222" stroke-width="1.4" fill="none"/><path d="M6 8.2 H10" stroke="#222" stroke-width="1"/></svg><div class="ss" style="position:absolute;left:46px;top:617px;white-space:pre;">__stack_chk_fail</div><div class="ss" style="position:absolute;left:323px;top:617px;width:42px;overflow:hidden;white-space:pre;">extern</div><div style="position:absolute;left:21px;top:630px;width:344px;height:14px;background:#ffe6ff"></div><svg style="position:absolute;left:24px;top:629px" width="16" height="16" viewBox="0 0 16 16"><rect x="0.5" y="0.5" width="15" height="15" rx="1.5" fill="#eeeeee" stroke="#777"/><rect x="1" y="1" width="14" height="2" fill="#1ec0f0"/><path d="M10.5 5.5 Q9 4.5 8 6 L6.5 13 Q6 14.5 4.5 14" stroke="#222" stroke-width="1.4" fill="none"/><path d="M6 8.2 H10" stroke="#222" stroke-width="1"/></svg><div class="ss" style="position:absolute;left:46px;top:631px;white-space:pre;font-weight:bold;letter-spacing:0;">memcmp</div><div class="ss" style="position:absolute;left:323px;top:631px;width:42px;overflow:hidden;white-space:pre;font-weight:bold;letter-spacing:0;">extern</div><div style="position:absolute;left:21px;top:644px;width:344px;height:14px;background:#ffe6ff"></div><svg style="position:absolute;left:24px;top:643px" width="16" height="16" viewBox="0 0 16 16"><rect x="0.5" y="0.5" width="15" height="15" rx="1.5" fill="#eeeeee" stroke="#777"/><rect x="1" y="1" width="14" height="2" fill="#1ec0f0"/><path d="M10.5 5.5 Q9 4.5 8 6 L6.5 13 Q6 14.5 4.5 14" stroke="#222" stroke-width="1.4" fill="none"/><path d="M6 8.2 H10" stroke="#222" stroke-width="1"/></svg><div class="ss" style="position:absolute;left:46px;top:645px;white-space:pre;font-weight:bold;letter-spacing:0;">putc</div><div class="ss" style="position:absolute;left:323px;top:645px;width:42px;overflow:hidden;white-space:pre;font-weight:bold;letter-spacing:0;">extern</div><div style="position:absolute;left:21px;top:658px;width:344px;height:14px;background:#ffe6ff"></div><svg style="position:absolute;left:24px;top:657px" width="16" height="16" viewBox="0 0 16 16"><rect x="0.5" y="0.5" width="15" height="15" rx="1.5" fill="#eeeeee" stroke="#777"/><rect x="1" y="1" width="14" height="2" fill="#1ec0f0"/><path d="M10.5 5.5 Q9 4.5 8 6 L6.5 13 Q6 14.5 4.5 14" stroke="#222" stroke-width="1.4" fill="none"/><path d="M6 8.2 H10" stroke="#222" stroke-width="1"/></svg><div class="ss" style="position:absolute;left:46px;top:659px;white-space:pre;">__memcpy_chk</div><div class="ss" style="position:absolute;left:323px;top:659px;width:42px;overflow:hidden;white-space:pre;">extern</div><div style="position:absolute;left:21px;top:672px;width:344px;height:14px;background:#ffe6ff"></div><svg style="position:absolute;left:24px;top:671px" width="16" height="16" viewBox="0 0 16 16"><rect x="0.5" y="0.5" width="15" height="15" rx="1.5" fill="#eeeeee" stroke="#777"/><rect x="1" y="1" width="14" height="2" fill="#1ec0f0"/><path d="M10.5 5.5 Q9 4.5 8 6 L6.5 13 Q6 14.5 4.5 14" stroke="#222" stroke-width="1.4" fill="none"/><path d="M6 8.2 H10" stroke="#222" stroke-width="1"/></svg><div class="ss" style="position:absolute;left:46px;top:673px;white-space:pre;font-weight:bold;letter-spacing:0;">malloc</div><div class="ss" style="position:absolute;left:323px;top:673px;width:42px;overflow:hidden;white-space:pre;font-weight:bold;letter-spacing:0;">extern</div><div style="position:absolute;left:21px;top:686px;width:344px;height:14px;background:#ffe6ff"></div><svg style="position:absolute;left:24px;top:685px" width="16" height="16" viewBox="0 0 16 16"><rect x="0.5" y="0.5" width="15" height="15" rx="1.5" fill="#eeeeee" stroke="#777"/><rect x="1" y="1" width="14" height="2" fill="#1ec0f0"/><path d="M10.5 5.5 Q9 4.5 8 6 L6.5 13 Q6 14.5 4.5 14" stroke="#222" stroke-width="1.4" fill="none"/><path d="M6 8.2 H10" stroke="#222" stroke-width="1"/></svg><div class="ss" style="position:absolute;left:46px;top:687px;white-space:pre;">__fgets_chk</div><div class="ss" style="position:absolute;left:323px;top:687px;width:42px;overflow:hidden;white-space:pre;">extern</div><div style="position:absolute;left:21px;top:700px;width:344px;height:14px;background:#ffe6ff"></div><svg style="position:absolute;left:24px;top:699px" width="16" height="16" viewBox="0 0 16 16"><rect x="0.5" y="0.5" width="15" height="15" rx="1.5" fill="#eeeeee" stroke="#777"/><rect x="1" y="1" width="14" height="2" fill="#1ec0f0"/><path d="M10.5 5.5 Q9 4.5 8 6 L6.5 13 Q6 14.5 4.5 14" stroke="#222" stroke-width="1.4" fill="none"/><path d="M6 8.2 H10" stroke="#222" stroke-width="1"/></svg><div class="ss" style="position:absolute;left:46px;top:701px;white-space:pre;font-weight:bold;letter-spacing:0;">ptrace</div><div class="ss" style="position:absolute;left:323px;top:701px;width:42px;overflow:hidden;white-space:pre;font-weight:bold;letter-spacing:0;">extern</div><div style="position:absolute;left:21px;top:714px;width:344px;height:14px;background:#ffe6ff"></div><svg style="position:absolute;left:24px;top:713px" width="16" height="16" viewBox="0 0 16 16"><rect x="0.5" y="0.5" width="15" height="15" rx="1.5" fill="#eeeeee" stroke="#777"/><rect x="1" y="1" width="14" height="2" fill="#1ec0f0"/><path d="M10.5 5.5 Q9 4.5 8 6 L6.5 13 Q6 14.5 4.5 14" stroke="#222" stroke-width="1.4" fill="none"/><path d="M6 8.2 H10" stroke="#222" stroke-width="1"/></svg><div class="ss" style="position:absolute;left:46px;top:715px;white-space:pre;font-weight:bold;letter-spacing:0;">waitpid</div><div class="ss" style="position:absolute;left:323px;top:715px;width:42px;overflow:hidden;white-space:pre;font-weight:bold;letter-spacing:0;">extern</div><div style="position:absolute;left:21px;top:728px;width:344px;height:14px;background:#ffe6ff"></div><svg style="position:absolute;left:24px;top:727px" width="16" height="16" viewBox="0 0 16 16"><rect x="0.5" y="0.5" width="15" height="15" rx="1.5" fill="#eeeeee" stroke="#777"/><rect x="1" y="1" width="14" height="2" fill="#1ec0f0"/><path d="M10.5 5.5 Q9 4.5 8 6 L6.5 13 Q6 14.5 4.5 14" stroke="#222" stroke-width="1.4" fill="none"/><path d="M6 8.2 H10" stroke="#222" stroke-width="1"/></svg><div class="ss" style="position:absolute;left:46px;top:729px;white-space:pre;font-weight:bold;letter-spacing:0;">perror</div><div class="ss" style="position:absolute;left:323px;top:729px;width:42px;overflow:hidden;white-space:pre;font-weight:bold;letter-spacing:0;">extern</div><div style="position:absolute;left:21px;top:742px;width:344px;height:14px;background:#ffe6ff"></div><svg style="position:absolute;left:24px;top:741px" width="16" height="16" viewBox="0 0 16 16"><rect x="0.5" y="0.5" width="15" height="15" rx="1.5" fill="#eeeeee" stroke="#777"/><rect x="1" y="1" width="14" height="2" fill="#1ec0f0"/><path d="M10.5 5.5 Q9 4.5 8 6 L6.5 13 Q6 14.5 4.5 14" stroke="#222" stroke-width="1.4" fill="none"/><path d="M6 8.2 H10" stroke="#222" stroke-width="1"/></svg><div class="ss" style="position:absolute;left:46px;top:743px;white-space:pre;font-weight:bold;letter-spacing:0;">__cxa_atexit</div><div class="ss" style="position:absolute;left:323px;top:743px;width:42px;overflow:hidden;white-space:pre;font-weight:bold;letter-spacing:0;">extern</div><div style="position:absolute;left:21px;top:756px;width:344px;height:14px;background:#ffe6ff"></div><svg style="position:absolute;left:24px;top:755px" width="16" height="16" viewBox="0 0 16 16"><rect x="0.5" y="0.5" width="15" height="15" rx="1.5" fill="#eeeeee" stroke="#777"/><rect x="1" y="1" width="14" height="2" fill="#1ec0f0"/><path d="M10.5 5.5 Q9 4.5 8 6 L6.5 13 Q6 14.5 4.5 14" stroke="#222" stroke-width="1.4" fill="none"/><path d="M6 8.2 H10" stroke="#222" stroke-width="1"/></svg><div class="ss" style="position:absolute;left:46px;top:757px;white-space:pre;">__fprintf_chk</div><div class="ss" style="position:absolute;left:323px;top:757px;width:42px;overflow:hidden;white-space:pre;">extern</div><div style="position:absolute;left:21px;top:770px;width:344px;height:14px;background:#ffe6ff"></div><svg style="position:absolute;left:24px;top:769px" width="16" height="16" viewBox="0 0 16 16"><rect x="0.5" y="0.5" width="15" height="15" rx="1.5" fill="#eeeeee" stroke="#777"/><rect x="1" y="1" width="14" height="2" fill="#1ec0f0"/><path d="M10.5 5.5 Q9 4.5 8 6 L6.5 13 Q6 14.5 4.5 14" stroke="#222" stroke-width="1.4" fill="none"/><path d="M6 8.2 H10" stroke="#222" stroke-width="1"/></svg><div class="ss" style="position:absolute;left:46px;top:771px;white-space:pre;font-weight:bold;letter-spacing:0;">execv</div><div class="ss" style="position:absolute;left:323px;top:771px;width:42px;overflow:hidden;white-space:pre;font-weight:bold;letter-spacing:0;">extern</div><div style="position:absolute;left:21px;top:784px;width:344px;height:14px;background:#ffe6ff"></div><svg style="position:absolute;left:24px;top:783px" width="16" height="16" viewBox="0 0 16 16"><rect x="0.5" y="0.5" width="15" height="15" rx="1.5" fill="#eeeeee" stroke="#777"/><rect x="1" y="1" width="14" height="2" fill="#1ec0f0"/><path d="M10.5 5.5 Q9 4.5 8 6 L6.5 13 Q6 14.5 4.5 14" stroke="#222" stroke-width="1.4" fill="none"/><path d="M6 8.2 H10" stroke="#222" stroke-width="1"/></svg><div class="ss" style="position:absolute;left:46px;top:785px;white-space:pre;font-weight:bold;letter-spacing:0;">fork</div><div class="ss" style="position:absolute;left:323px;top:785px;width:42px;overflow:hidden;white-space:pre;font-weight:bold;letter-spacing:0;">extern</div><div style="position:absolute;left:21px;top:798px;width:344px;height:14px;background:#ffe6ff"></div><svg style="position:absolute;left:24px;top:797px" width="16" height="16" viewBox="0 0 16 16"><rect x="0.5" y="0.5" width="15" height="15" rx="1.5" fill="#eeeeee" stroke="#777"/><rect x="1" y="1" width="14" height="2" fill="#1ec0f0"/><path d="M10.5 5.5 Q9 4.5 8 6 L6.5 13 Q6 14.5 4.5 14" stroke="#222" stroke-width="1.4" fill="none"/><path d="M6 8.2 H10" stroke="#222" stroke-width="1"/></svg><div class="ss" style="position:absolute;left:46px;top:799px;white-space:pre;font-weight:bold;letter-spacing:0;">__imp___cxa_finalize</div><div class="ss" style="position:absolute;left:323px;top:799px;width:42px;overflow:hidden;white-space:pre;font-weight:bold;letter-spacing:0;">extern</div><div style="position:absolute;left:21px;top:812px;width:344px;height:14px;background:#d8c4d8"></div><svg style="position:absolute;left:24px;top:811px" width="16" height="16" viewBox="0 0 16 16"><rect x="0.5" y="0.5" width="15" height="15" rx="1.5" fill="#a8cce8" stroke="#777"/><rect x="1" y="1" width="14" height="2" fill="#1ec0f0"/><path d="M10.5 5.5 Q9 4.5 8 6 L6.5 13 Q6 14.5 4.5 14" stroke="#222" stroke-width="1.4" fill="none"/><path d="M6 8.2 H10" stroke="#222" stroke-width="1"/></svg><div class="ss" style="position:absolute;left:46px;top:813px;white-space:pre;">__gmon_start__</div><div class="ss" style="position:absolute;left:323px;top:813px;width:42px;overflow:hidden;white-space:pre;">extern</div><div style="position:absolute;left:373px;top:432px;width:2px;height:380px;background:#8a8a8a"></div><div style="position:absolute;left:1px;top:831px;width:381px;height:16px;background:#f0f0f0"></div><div style="position:absolute;left:18px;top:838px;width:116px;height:2px;background:#8a8a8a"></div><div style="position:absolute;left:0px;top:847px;width:383px;height:1px;background:#8c9196"></div><div style="position:absolute;left:6px;top:852px;white-space:pre;font-family:'Liberation Sans', sans-serif;font-size:12.5px;line-height:16px;color:#000">Line 77 of 77, /__gmon_start__</div><div style="position:absolute;left:558px;top:147px;width:1361px;height:1px;background:#a0a0a0"></div><div style="position:absolute;left:388px;top:125px;width:170px;height:23px;background:#f8f8f8;border-top:1px solid #e4e4e4;box-sizing:border-box"></div><svg style="position:absolute;left:399px;top:128px" width="16" height="16" viewBox="0 0 16 16"><rect x="0.5" y="0.5" width="15" height="15" rx="1.5" fill="#e6e6e6" stroke="#777"/><rect x="1" y="1" width="14" height="2.5" fill="#10d0ff"/><path d="M1 3.75 H15" stroke="#666" stroke-width="0.5"/><path d="M4 6.5 H5 M4 9 H5 M4 11.5 H5" stroke="#1a80d0" stroke-width="1.3"/><path d="M6.5 6.5 H12 M6.5 9 H12 M6.5 11.5 H12" stroke="#333" stroke-width="1.2"/></svg><div class="ss" style="position:absolute;left:442px;top:131px;white-space:pre;">IDA View-A</div><svg style="position:absolute;left:529px;top:129px" width="15" height="15" viewBox="0 0 15 15"><rect x="0.5" y="0.5" width="14" height="14" rx="2" fill="#e87050" stroke="#c05030"/><path d="M4 4 L11 11 M11 4 L4 11" stroke="#fff" stroke-width="2"/></svg><div style="position:absolute;left:558px;top:127px;width:170px;height:20px;background:#f0f0f0;border-top:1px solid #e6e6e6;box-sizing:border-box"></div><div style="position:absolute;left:558px;top:128px;width:1px;height:19px;background:#e2e2e2"></div><svg style="position:absolute;left:569px;top:128px" width="16" height="16" viewBox="0 0 16 16"><rect x="0.5" y="0.5" width="15" height="15" rx="1.5" fill="#e6e6e6" stroke="#777"/><rect x="1" y="1" width="14" height="2.5" fill="#10d0ff"/><path d="M1 3.75 H15" stroke="#666" stroke-width="0.5"/><path d="M4 6.5 H5 M4 9 H5 M4 11.5 H5" stroke="#1a80d0" stroke-width="1.3"/><path d="M6.5 6.5 H12 M6.5 9 H12 M6.5 11.5 H12" stroke="#333" stroke-width="1.2"/></svg><div class="ss" style="position:absolute;left:606px;top:131px;white-space:pre;">Pseudocode-A</div><svg style="position:absolute;left:700px;top:129px" width="15" height="15" viewBox="0 0 15 15"><rect x="0.5" y="0.5" width="14" height="14" rx="2" fill="#c0c0c0" stroke="#a8a8a8"/><path d="M4 4 L11 11 M11 4 L4 11" stroke="#fff" stroke-width="2"/></svg><div style="position:absolute;left:728px;top:127px;width:170px;height:20px;background:#f0f0f0;border-top:1px solid #e6e6e6;box-sizing:border-box"></div><div style="position:absolute;left:728px;top:128px;width:1px;height:19px;background:#e2e2e2"></div><svg style="position:absolute;left:740px;top:128px" width="16" height="16" viewBox="0 0 16 16"><rect x="0.5" y="0.5" width="15" height="15" rx="1.5" fill="#e6e6e6" stroke="#777"/><rect x="1" y="1" width="14" height="2.5" fill="#10d0ff"/><path d="M1 3.75 H15" stroke="#666" stroke-width="0.5"/><path d="M4 6.5 H5 M4 9 H5 M4 11.5 H5" stroke="#1a80d0" stroke-width="1.3"/><path d="M6.5 6.5 H12 M6.5 9 H12 M6.5 11.5 H12" stroke="#333" stroke-width="1.2"/></svg><div class="ss" style="position:absolute;left:776px;top:131px;white-space:pre;">Pseudocode-B</div><svg style="position:absolute;left:870px;top:129px" width="15" height="15" viewBox="0 0 15 15"><rect x="0.5" y="0.5" width="14" height="14" rx="2" fill="#c0c0c0" stroke="#a8a8a8"/><path d="M4 4 L11 11 M11 4 L4 11" stroke="#fff" stroke-width="2"/></svg><div style="position:absolute;left:898px;top:127px;width:170px;height:20px;background:#f0f0f0;border-top:1px solid #e6e6e6;box-sizing:border-box"></div><div style="position:absolute;left:898px;top:128px;width:1px;height:19px;background:#e2e2e2"></div><svg style="position:absolute;left:910px;top:128px" width="16" height="16" viewBox="0 0 16 16"><rect x="0.5" y="0.5" width="15" height="15" rx="1.5" fill="#e6e6e6" stroke="#777"/><rect x="1" y="1" width="14" height="2.5" fill="#10d0ff"/><path d="M1 3.75 H15" stroke="#666" stroke-width="0.5"/><path d="M4 6.5 H5 M4 9 H5 M4 11.5 H5" stroke="#1a80d0" stroke-width="1.3"/><path d="M6.5 6.5 H12 M6.5 9 H12 M6.5 11.5 H12" stroke="#333" stroke-width="1.2"/></svg><div class="ss" style="position:absolute;left:946px;top:131px;white-space:pre;">Pseudocode-C</div><svg style="position:absolute;left:1040px;top:129px" width="15" height="15" viewBox="0 0 15 15"><rect x="0.5" y="0.5" width="14" height="14" rx="2" fill="#c0c0c0" stroke="#a8a8a8"/><path d="M4 4 L11 11 M11 4 L4 11" stroke="#fff" stroke-width="2"/></svg><div style="position:absolute;left:1068px;top:127px;width:170px;height:20px;background:#f0f0f0;border-top:1px solid #e6e6e6;box-sizing:border-box"></div><div style="position:absolute;left:1068px;top:128px;width:1px;height:19px;background:#e2e2e2"></div><svg style="position:absolute;left:1080px;top:128px" width="16" height="16" viewBox="0 0 16 16"><rect x="0.5" y="0.5" width="15" height="15" rx="1.5" fill="#5ee6a0" stroke="#777"/><rect x="1" y="1" width="14" height="2.5" fill="#10d0ff"/><circle cx="6" cy="7.5" r="1.5" fill="#063"/><circle cx="10" cy="7.5" r="1.5" fill="#063"/><path d="M7 8 L6 11 M11 8 L10 11" stroke="#063" stroke-width="1.3"/></svg><div class="ss" style="position:absolute;left:1131px;top:131px;white-space:pre;">Strings</div><svg style="position:absolute;left:1210px;top:129px" width="15" height="15" viewBox="0 0 15 15"><rect x="0.5" y="0.5" width="14" height="14" rx="2" fill="#c0c0c0" stroke="#a8a8a8"/><path d="M4 4 L11 11 M11 4 L4 11" stroke="#fff" stroke-width="2"/></svg><div style="position:absolute;left:1238px;top:127px;width:171px;height:20px;background:#f0f0f0;border-top:1px solid #e6e6e6;box-sizing:border-box"></div><div style="position:absolute;left:1238px;top:128px;width:1px;height:19px;background:#e2e2e2"></div><svg style="position:absolute;left:1251px;top:128px" width="16" height="16" viewBox="0 0 16 16"><rect x="0.5" y="0.5" width="15" height="15" rx="1.5" fill="#f6f6f6" stroke="#777"/><rect x="1" y="1" width="14" height="2.5" fill="#10d0ff"/><path d="M1 3.75 H15" stroke="#666" stroke-width="0.5"/><circle cx="7.8" cy="9.5" r="4.6" fill="none" stroke="#222" stroke-width="1.1"/><path d="M4.5 12 Q8 9 11.2 12 Q8 15 4.5 12 Z" fill="#222"/><ellipse cx="7.8" cy="12" rx="1.2" ry="2" fill="#40e890"/></svg><div class="ss" style="position:absolute;left:1292px;top:131px;white-space:pre;">Hex View-1</div><svg style="position:absolute;left:1380px;top:129px" width="15" height="15" viewBox="0 0 15 15"><rect x="0.5" y="0.5" width="14" height="14" rx="2" fill="#c0c0c0" stroke="#a8a8a8"/><path d="M4 4 L11 11 M11 4 L4 11" stroke="#fff" stroke-width="2"/></svg><div style="position:absolute;left:1409px;top:127px;width:169px;height:20px;background:#f0f0f0;border-top:1px solid #e6e6e6;box-sizing:border-box"></div><div style="position:absolute;left:1409px;top:128px;width:1px;height:19px;background:#e2e2e2"></div><svg style="position:absolute;left:1421px;top:128px" width="16" height="16" viewBox="0 0 16 16"><rect x="0.5" y="0.5" width="15" height="15" rx="1.5" fill="#f6f6f6" stroke="#777"/><rect x="1" y="1" width="14" height="2.5" fill="#10d0ff"/><path d="M1 3.75 H15" stroke="#666" stroke-width="0.5"/><circle cx="7.5" cy="10" r="5" fill="#1a1a1a"/><path d="M7.3 6.5 V12.5 Q7.3 13.3 8.5 13 M5.8 8.5 H9" stroke="#fff" stroke-width="1.4" fill="none"/></svg><div class="ss" style="position:absolute;left:1460px;top:131px;white-space:pre;">Local Types</div><svg style="position:absolute;left:1551px;top:129px" width="15" height="15" viewBox="0 0 15 15"><rect x="0.5" y="0.5" width="14" height="14" rx="2" fill="#c0c0c0" stroke="#a8a8a8"/><path d="M4 4 L11 11 M11 4 L4 11" stroke="#fff" stroke-width="2"/></svg><div style="position:absolute;left:1578px;top:127px;width:171px;height:20px;background:#f0f0f0;border-top:1px solid #e6e6e6;box-sizing:border-box"></div><div style="position:absolute;left:1578px;top:128px;width:1px;height:19px;background:#e2e2e2"></div><svg style="position:absolute;left:1591px;top:128px" width="16" height="16" viewBox="0 0 16 16"><rect x="0.5" y="0.5" width="15" height="15" rx="1.5" fill="#f6f6f6" stroke="#777"/><rect x="1" y="1" width="14" height="2.5" fill="#10d0ff"/><path d="M1 3.75 H15" stroke="#666" stroke-width="0.5"/><path d="M6.5 4 V15" stroke="#777" stroke-width="1"/><path d="M8.5 7 H13.5 M8.5 9 H13.5 M8.5 11 H13.5 M8.5 13 H13.5" stroke="#777" stroke-width="0.7"/><path d="M1.5 4.5 L7.5 8 L1.5 11.5 Z" fill="#5ee6a0"/></svg><div class="ss" style="position:absolute;left:1641px;top:131px;white-space:pre;">Imports</div><svg style="position:absolute;left:1720px;top:129px" width="15" height="15" viewBox="0 0 15 15"><rect x="0.5" y="0.5" width="14" height="14" rx="2" fill="#c0c0c0" stroke="#a8a8a8"/><path d="M4 4 L11 11 M11 4 L4 11" stroke="#fff" stroke-width="2"/></svg><div style="position:absolute;left:1749px;top:127px;width:169px;height:20px;background:#f0f0f0;border-top:1px solid #e6e6e6;box-sizing:border-box"></div><div style="position:absolute;left:1749px;top:128px;width:1px;height:19px;background:#e2e2e2"></div><svg style="position:absolute;left:1762px;top:128px" width="16" height="16" viewBox="0 0 16 16"><rect x="0.5" y="0.5" width="15" height="15" rx="1.5" fill="#f6f6f6" stroke="#777"/><rect x="1" y="1" width="14" height="2.5" fill="#10d0ff"/><path d="M1 3.75 H15" stroke="#666" stroke-width="0.5"/><path d="M9.5 4 V15" stroke="#777" stroke-width="1"/><path d="M2 7 H7 M2 9 H7 M2 11 H7 M2 13 H7" stroke="#777" stroke-width="0.7"/><path d="M8.5 4.5 L14.5 8 L8.5 11.5 Z" fill="#5ee6a0"/></svg><div class="ss" style="position:absolute;left:1812px;top:131px;white-space:pre;">Exports</div><svg style="position:absolute;left:1891px;top:129px" width="15" height="15" viewBox="0 0 15 15"><rect x="0.5" y="0.5" width="14" height="14" rx="2" fill="#c0c0c0" stroke="#a8a8a8"/><path d="M4 4 L11 11 M11 4 L4 11" stroke="#fff" stroke-width="2"/></svg><div style="position:absolute;left:387px;top:148px;width:1532px;height:722px;background:#ffffff"></div><div style="position:absolute;left:462px;top:148px;width:5px;height:722px;background:#f0f0f0"></div><div style="position:absolute;left:467px;top:149px;width:1436px;height:683px;overflow:hidden"><div class="dm" style="position:absolute;left:16px;top:2px;white-space:pre"><span style="color:#808080;">.init_array:0000555555558CC8</span><span style="color:#0000ff;">                         </span><span style="color:#808080;">; ===========================================================================</span></div><div class="dm" style="position:absolute;left:16px;top:17px;white-space:pre"><span style="color:#808080;">.init_array:0000555555558CC8</span><span style="color:#0000ff;">                         </span></div><div class="dm" style="position:absolute;left:16px;top:32px;white-space:pre"><span style="color:#808080;">.init_array:0000555555558CC8</span><span style="color:#0000ff;">                         </span><span style="color:#808080;">; Segment type: Pure data</span></div><div class="dm" style="position:absolute;left:16px;top:47px;white-space:pre"><span style="color:#808080;">.init_array:0000555555558CC8</span><span style="color:#0000ff;">                         </span><span style="color:#808080;">; Segment permissions: Read/Write</span></div><div class="dm" style="position:absolute;left:16px;top:62px;white-space:pre"><span style="color:#808080;">.init_array:0000555555558CC8</span><span style="color:#0000ff;">                         </span><span style="color:#0000ff;">_init_array</span><span style="color:#0000ff;">     </span><span style="color:#0000ff;">segment qword public 'DATA' use64</span></div><div class="dm" style="position:absolute;left:16px;top:77px;white-space:pre"><span style="color:#808080;">.init_array:0000555555558CC8</span><span style="color:#0000ff;">                         </span><span style="color:#0000ff;">                </span><span style="color:#0000ff;">assume cs:_init_array</span></div><div class="dm" style="position:absolute;left:16px;top:92px;white-space:pre"><span style="color:#808080;">.init_array:0000555555558CC8</span><span style="color:#0000ff;">                         </span><span style="color:#0000ff;">                </span><span style="color:#808080;">;org 555555558CC8h</span></div><div class="dm" style="position:absolute;left:16px;top:107px;white-space:pre"><span style="color:#808080;">.init_array:0000555555558CC8</span><span style="color:#0000ff;"> 20 53 55 55 55 55 00 00 </span><span style="color:#0000ff;">                </span><span style="color:#000080;">dq offset sub_555555555320</span></div><div class="dm" style="position:absolute;left:16px;top:122px;white-space:pre"><span style="color:#808080;">.init_array:0000555555558CD0</span><span style="color:#0000ff;"> 5D 60 55 55 55 55 00 00 </span><span style="color:#0000ff;">                </span><span style="color:#000080;">dq offset sub_55555555605D</span></div><div class="dm" style="position:absolute;left:16px;top:137px;white-space:pre"><span style="color:#808080;">.init_array:0000555555558CD0</span><span style="color:#0000ff;">                         </span><span style="color:#0000ff;">_init_array</span><span style="color:#0000ff;">     </span><span style="color:#0000ff;">ends</span></div><div class="dm" style="position:absolute;left:16px;top:152px;white-space:pre"><span style="color:#808080;">.init_array:0000555555558CD0</span><span style="color:#0000ff;">                         </span></div><div class="dm" style="position:absolute;left:16px;top:167px;white-space:pre"><span style="color:#0000ff;">.fini_array:0000555555558CD8</span><span style="color:#0000ff;">                         </span><span style="color:#0000ff;">; ELF Termination Function Table</span></div><div class="dm" style="position:absolute;left:16px;top:182px;white-space:pre"><span style="color:#0000ff;">.fini_array:0000555555558CD8</span><span style="color:#0000ff;">                         </span><span style="color:#808080;">; ===========================================================================</span></div><div class="dm" style="position:absolute;left:16px;top:197px;white-space:pre"><span style="color:#0000ff;">.fini_array:0000555555558CD8</span><span style="color:#0000ff;">                         </span></div><div class="dm" style="position:absolute;left:16px;top:212px;white-space:pre"><span style="color:#0000ff;">.fini_array:0000555555558CD8</span><span style="color:#0000ff;">                         </span><span style="color:#808080;">; Segment type: Pure data</span></div><div class="dm" style="position:absolute;left:16px;top:227px;white-space:pre"><span style="color:#0000ff;">.fini_array:0000555555558CD8</span><span style="color:#0000ff;">                         </span><span style="color:#808080;">; Segment permissions: Read/Write</span></div><div class="dm" style="position:absolute;left:16px;top:242px;white-space:pre"><span style="color:#0000ff;">.fini_array:0000555555558CD8</span><span style="color:#0000ff;">                         </span><span style="color:#0000ff;background:#ffff00">_fini_array</span><span style="color:#0000ff;">     </span><span style="color:#0000ff;">segment qword public 'DATA' use64</span></div><div class="dm" style="position:absolute;left:16px;top:257px;white-space:pre"><span style="color:#0000ff;">.fini_array:0000555555558CD8</span><span style="color:#0000ff;">                         </span><span style="color:#0000ff;">                </span><span style="color:#0000ff;">assume cs:</span><span style="color:#0000ff;background:#ffff00">_fini_array</span></div><div class="dm" style="position:absolute;left:16px;top:272px;white-space:pre"><span style="color:#0000ff;">.fini_array:0000555555558CD8</span><span style="color:#0000ff;">                         </span><span style="color:#0000ff;">                </span><span style="color:#808080;">;org 555555558CD8h</span></div><div class="dm" style="position:absolute;left:16px;top:287px;white-space:pre"><span style="color:#0000ff;">.fini_array:0000555555558CD8</span><span style="color:#0000ff;"> E0 52 55 55 55 55 00 00 </span><span style="color:#0000ff;">                </span><span style="color:#000080;">dq offset sub_5555555552E0</span></div><div style="position:absolute;left:0;top:300px;width:1436px;height:15px;background:#e3e3e3"></div><div class="dm" style="position:absolute;left:16px;top:302px;white-space:pre"><span style="color:#0000ff;">.fini_array:0000555555558CD8</span><span style="color:#0000ff;">                         </span><span style="color:#0000ff;background:#e8e840">_fini_array</span><span style="color:#0000ff;">     </span><span style="color:#0000ff;">ends</span></div><div class="dm" style="position:absolute;left:16px;top:317px;white-space:pre"><span style="color:#0000ff;">.fini_array:0000555555558CD8</span><span style="color:#0000ff;">                         </span></div><div class="dm" style="position:absolute;left:16px;top:332px;white-space:pre"><span style="color:#808080;">.data.rel.ro:0000555555558CE0</span><span style="color:#0000ff;">                         </span><span style="color:#808080;">; ===========================================================================</span></div><div class="dm" style="position:absolute;left:16px;top:347px;white-space:pre"><span style="color:#808080;">.data.rel.ro:0000555555558CE0</span><span style="color:#0000ff;">                         </span></div><div class="dm" style="position:absolute;left:16px;top:362px;white-space:pre"><span style="color:#808080;">.data.rel.ro:0000555555558CE0</span><span style="color:#0000ff;">                         </span><span style="color:#808080;">; Segment type: Pure data</span></div><div class="dm" style="position:absolute;left:16px;top:377px;white-space:pre"><span style="color:#808080;">.data.rel.ro:0000555555558CE0</span><span style="color:#0000ff;">                         </span><span style="color:#808080;">; Segment permissions: Read/Write</span></div><div class="dm" style="position:absolute;left:16px;top:392px;white-space:pre"><span style="color:#808080;">.data.rel.ro:0000555555558CE0</span><span style="color:#0000ff;">                         </span><span style="color:#0000ff;">_data_rel_ro</span><span style="color:#0000ff;">    </span><span style="color:#0000ff;">segment align_32 public 'DATA' use64</span></div><div class="dm" style="position:absolute;left:16px;top:407px;white-space:pre"><span style="color:#808080;">.data.rel.ro:0000555555558CE0</span><span style="color:#0000ff;">                         </span><span style="color:#0000ff;">                </span><span style="color:#0000ff;">assume cs:_data_rel_ro</span></div><div class="dm" style="position:absolute;left:16px;top:422px;white-space:pre"><span style="color:#808080;">.data.rel.ro:0000555555558CE0</span><span style="color:#0000ff;">                         </span><span style="color:#0000ff;">                </span><span style="color:#808080;">;org 555555558CE0h</span></div><div class="dm" style="position:absolute;left:16px;top:437px;white-space:pre"><span style="color:#808080;">.data.rel.ro:0000555555558CE0</span><span style="color:#0000ff;"> 29 53 55 55 55 55 00 00 </span><span style="color:#0000ff;">funcs_1DBD</span><span style="color:#0000ff;">      </span><span style="color:#000080;">dq offset sub_555555555329</span></div><div class="dm" style="position:absolute;left:16px;top:452px;white-space:pre"><span style="color:#808080;">.data.rel.ro:0000555555558CE0</span><span style="color:#0000ff;">                         </span><span style="color:#0000ff;">                                        </span><span style="color:#8080ff;">; DATA XREF: sub_555555555B9B+5F↑o</span></div><div class="dm" style="position:absolute;left:16px;top:467px;white-space:pre"><span style="color:#808080;">.data.rel.ro:0000555555558CE0</span><span style="color:#0000ff;">                         </span><span style="color:#0000ff;">                                        </span><span style="color:#8080ff;">; sub_555555555B9B+204↑r</span></div><div class="dm" style="position:absolute;left:16px;top:482px;white-space:pre"><span style="color:#808080;">.data.rel.ro:0000555555558CE8</span><span style="color:#0000ff;"> 3E 57 55 55 55 55 00 00 </span><span style="color:#0000ff;">                </span><span style="color:#000080;">dq offset sub_55555555573E</span></div><div class="dm" style="position:absolute;left:16px;top:497px;white-space:pre"><span style="color:#808080;">.data.rel.ro:0000555555558CF0</span><span style="color:#0000ff;"> DD 57 55 55 55 55 00 00 </span><span style="color:#0000ff;">                </span><span style="color:#000080;">dq offset sub_5555555557DD</span></div><div class="dm" style="position:absolute;left:16px;top:512px;white-space:pre"><span style="color:#808080;">.data.rel.ro:0000555555558CF8</span><span style="color:#0000ff;"> 9F 58 55 55 55 55 00 00 </span><span style="color:#0000ff;">                </span><span style="color:#000080;">dq offset sub_55555555589F</span></div><div class="dm" style="position:absolute;left:16px;top:527px;white-space:pre"><span style="color:#808080;">.data.rel.ro:0000555555558D00</span><span style="color:#0000ff;"> C1 59 55 55 55 55 00 00 </span><span style="color:#0000ff;">                </span><span style="color:#000080;">dq offset sub_5555555559C1</span></div><div class="dm" style="position:absolute;left:16px;top:542px;white-space:pre"><span style="color:#808080;">.data.rel.ro:0000555555558D08</span><span style="color:#0000ff;"> 4E 55 55 55 55 55 00 00 </span><span style="color:#0000ff;">                </span><span style="color:#000080;">dq offset sub_55555555554E</span></div><div class="dm" style="position:absolute;left:16px;top:557px;white-space:pre"><span style="color:#808080;">.data.rel.ro:0000555555558D10</span><span style="color:#0000ff;"> 4A 56 55 55 55 55 00 00 </span><span style="color:#0000ff;">                </span><span style="color:#000080;">dq offset sub_55555555564A</span></div><div class="dm" style="position:absolute;left:16px;top:572px;white-space:pre"><span style="color:#808080;">.data.rel.ro:0000555555558D18</span><span style="color:#0000ff;"> B2 5A 55 55 55 55 00 00 </span><span style="color:#0000ff;">                </span><span style="color:#000080;">dq offset sub_555555555AB2</span></div><div class="dm" style="position:absolute;left:16px;top:587px;white-space:pre"><span style="color:#808080;">.data.rel.ro:0000555555558D20</span><span style="color:#0000ff;"> 33 53 55 55 55 55 00 00 </span><span style="color:#0000ff;">                </span><span style="color:#000080;">dq offset sub_555555555333</span></div><div class="dm" style="position:absolute;left:16px;top:602px;white-space:pre"><span style="color:#808080;">.data.rel.ro:0000555555558D28</span><span style="color:#0000ff;"> 3D 53 55 55 55 55 00 00 </span><span style="color:#0000ff;">                </span><span style="color:#000080;">dq offset sub_55555555533D</span></div><div class="dm" style="position:absolute;left:16px;top:617px;white-space:pre"><span style="color:#808080;">.data.rel.ro:0000555555558D28</span><span style="color:#0000ff;">                         </span><span style="color:#0000ff;">_data_rel_ro</span><span style="color:#0000ff;">    </span><span style="color:#0000ff;">ends</span></div><div class="dm" style="position:absolute;left:16px;top:632px;white-space:pre"><span style="color:#808080;">.data.rel.ro:0000555555558D28</span><span style="color:#0000ff;">                         </span></div><div class="dm" style="position:absolute;left:16px;top:647px;white-space:pre"><span style="color:#808080;">LOAD:0000555555558D30</span><span style="color:#0000ff;">                         </span><span style="color:#0000ff;">; ELF Dynamic Information</span></div><div class="dm" style="position:absolute;left:16px;top:662px;white-space:pre"><span style="color:#808080;">LOAD:0000555555558D30</span><span style="color:#0000ff;">                         </span><span style="color:#808080;">; ===========================================================================</span></div><div class="dm" style="position:absolute;left:16px;top:677px;white-space:pre"><span style="color:#808080;">LOAD:0000555555558D30</span><span style="color:#0000ff;">                         </span></div></div><svg style="position:absolute;left:470px;top:258px" width="9" height="6" viewBox="0 0 9 6"><path d="M0.8 0.8 L4.5 4.5 L8.2 0.8" stroke="#222" stroke-width="1.5" fill="none"/></svg><svg style="position:absolute;left:451px;top:253px" width="6" height="6" viewBox="0 0 6 6"><circle cx="3" cy="3" r="3" fill="#55ccff"/></svg><svg style="position:absolute;left:451px;top:268px" width="6" height="6" viewBox="0 0 6 6"><circle cx="3" cy="3" r="3" fill="#55ccff"/></svg><svg style="position:absolute;left:470px;top:438px" width="9" height="6" viewBox="0 0 9 6"><path d="M0.8 0.8 L4.5 4.5 L8.2 0.8" stroke="#222" stroke-width="1.5" fill="none"/></svg><svg style="position:absolute;left:451px;top:433px" width="6" height="6" viewBox="0 0 6 6"><circle cx="3" cy="3" r="3" fill="#55ccff"/></svg><svg style="position:absolute;left:470px;top:588px" width="9" height="6" viewBox="0 0 9 6"><path d="M0.8 0.8 L4.5 4.5 L8.2 0.8" stroke="#222" stroke-width="1.5" fill="none"/></svg><svg style="position:absolute;left:451px;top:583px" width="6" height="6" viewBox="0 0 6 6"><circle cx="3" cy="3" r="3" fill="#55ccff"/></svg><div style="position:absolute;left:889px;top:450px;width:2px;height:14px;background:#000"></div><div style="position:absolute;left:1903px;top:148px;width:16px;height:684px;background:#f0f0f0"></div><div style="position:absolute;left:1910px;top:662px;width:2px;height:18px;background:#6a6a6a"></div><div style="position:absolute;left:467px;top:832px;width:1436px;height:20px;background:#f0f0f0"></div><div class="dm" style="position:absolute;left:469px;top:837px;white-space:pre;">00003CD8</div><div style="position:absolute;left:527px;top:834px;width:1px;height:16px;background:#d8d8d8"></div><div class="dm" style="position:absolute;left:531px;top:837px;white-space:pre;">0000555555558CD8: .fini_array:0000555555558CD8</div><div style="position:absolute;left:853px;top:834px;width:1px;height:16px;background:#d8d8d8"></div><div class="dm" style="position:absolute;left:860px;top:837px;white-space:pre;">(Synchronized with Hex View-1)</div><div style="position:absolute;left:1070px;top:834px;width:1px;height:16px;background:#d8d8d8"></div><div style="position:absolute;left:467px;top:852px;width:1436px;height:17px;background:#f0f0f0"></div><div style="position:absolute;left:484px;top:860px;width:1333px;height:2px;background:#7a7a7a"></div><div style="position:absolute;left:467px;top:852px;width:1436px;height:1px;background:#fafafa"></div><div style="position:absolute;left:466px;top:869px;width:1453px;height:1px;background:#1a6fc8"></div><div style="position:absolute;left:0px;top:874px;width:1919px;height:1px;background:#8c9196"></div><div style="position:absolute;left:0px;top:875px;width:1919px;height:28px;background:#f0f0f0"></div><div style="position:absolute;left:0px;top:874px;width:1px;height:161px;background:#c4c4c4"></div><div style="position:absolute;left:0px;top:903px;width:1919px;height:1px;background:#8c9196"></div><svg style="position:absolute;left:4px;top:880px" width="16" height="16" viewBox="0 0 16 16"><rect x="0.5" y="0.5" width="15" height="15" rx="1.5" fill="#e6e6e6" stroke="#777"/><rect x="1" y="1" width="14" height="2.5" fill="#10d0ff"/><path d="M1 3.75 H15" stroke="#666" stroke-width="0.5"/><path d="M4 6.5 H5 M4 9 H5 M4 11.5 H5" stroke="#1a80d0" stroke-width="1.3"/><path d="M6.5 6.5 H12 M6.5 9 H12 M6.5 11.5 H12" stroke="#333" stroke-width="1.2"/></svg><div class="ss" style="position:absolute;left:25px;top:882px;white-space:pre;">Output</div><svg style="position:absolute;left:1842px;top:882px" width="75" height="14" viewBox="0 0 75 14"><rect x="6.5" y="2.5" width="10" height="9" fill="none" stroke="#333"/><rect x="6.5" y="2" width="10" height="2" fill="#333"/><rect x="35.5" y="6.5" width="6" height="5" fill="none" stroke="#333"/><path d="M37.5 6.5 V3.5 H44.5 V8.5 H41.5" fill="none" stroke="#333"/><path d="M61 3.5 L68 10.5 M68 3.5 L61 10.5" stroke="#333" stroke-width="1.6"/></svg><div style="position:absolute;left:1px;top:906px;width:1902px;height:128px;background:#ffffff"></div><div style="position:absolute;left:1903px;top:906px;width:16px;height:128px;background:#f0f0f0"></div><div style="position:absolute;left:1910px;top:999px;width:2px;height:18px;background:#6a6a6a"></div><div style="position:absolute;left:1px;top:906px;width:1902px;height:128px;overflow:hidden"><div class="dm" style="position:absolute;left:6px;top:-5px;white-space:pre;color:#000">555555555240: restored microcode from idb</div><div class="dm" style="position:absolute;left:6px;top:10px;white-space:pre;color:#000">555555555240: restored pseudocode from idb</div><div class="dm" style="position:absolute;left:6px;top:25px;white-space:pre;color:#000">55555555524A: positive sp value 8 has been found</div><div class="dm" style="position:absolute;left:6px;top:40px;white-space:pre;color:#000">555555555251: variable 'v3' is possibly undefined</div><div class="dm" style="position:absolute;left:6px;top:55px;white-space:pre;color:#000">[Patching] Loaded v0.1.5 - (c) Markus Gaasedelen/Willy Terra - 2024</div><div class="dm" style="position:absolute;left:6px;top:70px;white-space:pre;color:#000">---------------------------------------------------------------------------------------------</div><div class="dm" style="position:absolute;left:6px;top:85px;white-space:pre;color:#000">Python 3.8.10 (tags/v3.8.10:3d8993a, May  3 2021, 11:48:03) [MSC v.1928 64 bit (AMD64)]</div><div class="dm" style="position:absolute;left:6px;top:100px;white-space:pre;color:#000">IDAPython 64-bit v9.0.0 final (serial 0) (c) The IDAPython Team &lt;idapython@googlegroups.com&gt;</div><div class="dm" style="position:absolute;left:6px;top:115px;white-space:pre;color:#000">---------------------------------------------------------------------------------------------</div></div><div style="position:absolute;left:0px;top:1034px;width:1919px;height:1px;background:#6e6e6e"></div><div style="position:absolute;left:3px;top:1038px;width:44px;height:20px;background:#fafafa;border:1px solid #cfcfcf;box-sizing:border-box;border-radius:3px"></div><div class="ss" style="position:absolute;left:7px;top:1041px;white-space:pre;">Python</div><div style="position:absolute;left:53px;top:1038px;width:1864px;height:20px;background:#ffffff;border-bottom:1px solid #8a8a8a;box-sizing:border-box"></div><div class="ss" style="position:absolute;left:2px;top:1065px;white-space:pre;letter-spacing:0">AU:  idle</div><div style="position:absolute;left:80px;top:1062px;width:1px;height:17px;background:#d8d8d8"></div><div class="ss" style="position:absolute;left:85px;top:1065px;white-space:pre;letter-spacing:-0.2px">Down</div><div style="position:absolute;left:156px;top:1062px;width:1px;height:17px;background:#d8d8d8"></div><div class="ss" style="position:absolute;left:161px;top:1065px;white-space:pre;letter-spacing:0">Disk: 105GB</div><div style="position:absolute;left:239px;top:1062px;width:1px;height:17px;background:#d8d8d8"></div><div style="position:absolute;left:1920px;top:0px;width:1px;height:870px;background:#27413a"></div><div style="position:absolute;left:1919px;top:874px;width:1px;height:161px;background:#8c9196"></div></body></html>
